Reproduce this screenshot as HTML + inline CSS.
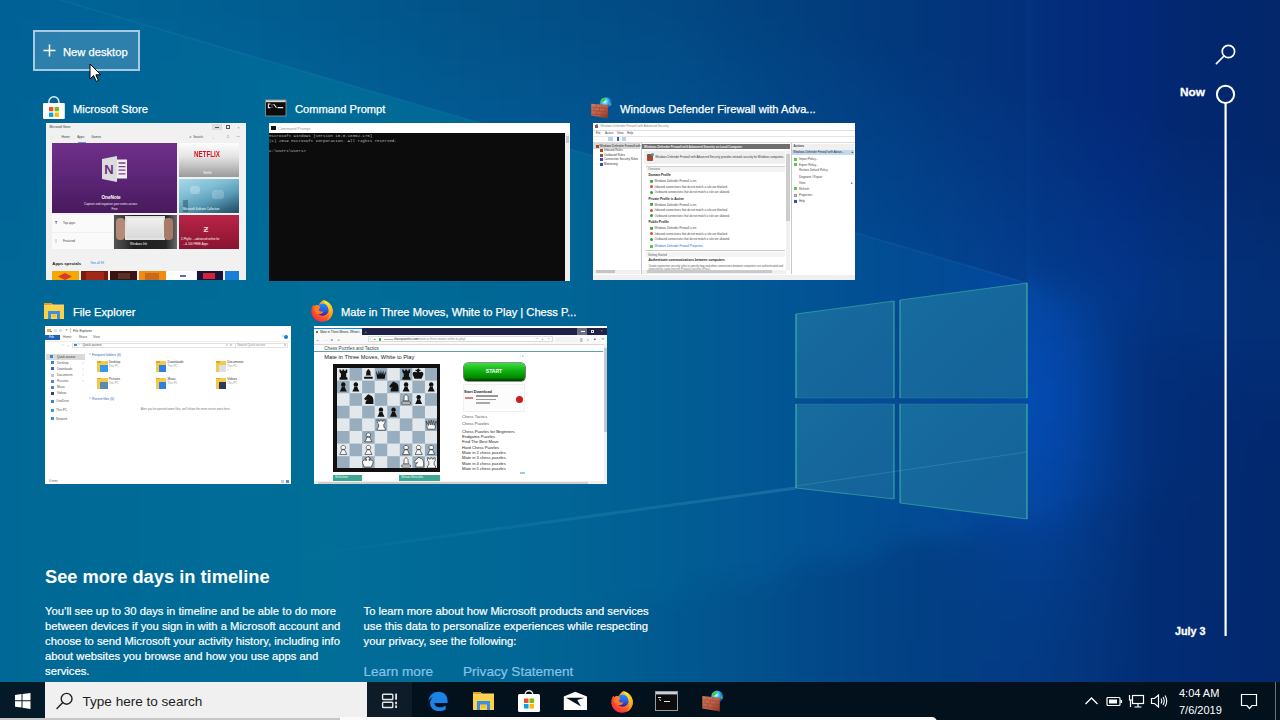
<!DOCTYPE html>
<html><head><meta charset="utf-8">
<style>
*{margin:0;padding:0;box-sizing:border-box}
html,body{width:1280px;height:720px;overflow:hidden}
body{position:relative;font-family:"Liberation Sans",sans-serif;background:#0a5a96;color:#fff}
.a{position:absolute}
.t{position:absolute;white-space:nowrap;color:#fff;font-size:11.15px;line-height:14px;-webkit-text-stroke:0.25px #fff}
.tx{-webkit-text-stroke:0.2px currentColor}
.th{position:absolute;overflow:hidden;background:#fff}
.th div,.th svg{position:absolute}
.g{background:#888}
i{display:block}
</style></head><body>

<!-- BACKGROUND -->
<div class="a" style="left:0;top:0;width:1280px;height:720px;overflow:hidden"><div style="position:absolute;left:-60px;top:-60px;width:1400px;height:840px;display:grid;grid-template-columns:repeat(70,20px);grid-auto-rows:20px;filter:blur(11px)">
<i style="background:#006096"></i><i style="background:#006096"></i><i style="background:#006096"></i><i style="background:#006096"></i><i style="background:#006196"></i><i style="background:#006296"></i><i style="background:#006296"></i><i style="background:#006397"></i><i style="background:#006397"></i><i style="background:#006497"></i><i style="background:#006597"></i><i style="background:#006597"></i><i style="background:#006697"></i><i style="background:#006797"></i><i style="background:#006797"></i><i style="background:#006898"></i><i style="background:#006998"></i><i style="background:#006998"></i><i style="background:#016a98"></i><i style="background:#016a98"></i><i style="background:#016a98"></i><i style="background:#016997"></i><i style="background:#016997"></i><i style="background:#016897"></i><i style="background:#016897"></i><i style="background:#016796"></i><i style="background:#016796"></i><i style="background:#016696"></i><i style="background:#016696"></i><i style="background:#016595"></i><i style="background:#016595"></i><i style="background:#016495"></i><i style="background:#016395"></i><i style="background:#016295"></i><i style="background:#016095"></i><i style="background:#015f94"></i><i style="background:#015e94"></i><i style="background:#015c94"></i><i style="background:#025b94"></i><i style="background:#025994"></i><i style="background:#025894"></i><i style="background:#025694"></i><i style="background:#025594"></i><i style="background:#025394"></i><i style="background:#025294"></i><i style="background:#025094"></i><i style="background:#024f94"></i><i style="background:#024d94"></i><i style="background:#024c93"></i><i style="background:#034b93"></i><i style="background:#034993"></i><i style="background:#034893"></i><i style="background:#034792"></i><i style="background:#034592"></i><i style="background:#032f7b"></i><i style="background:#032e7b"></i><i style="background:#032d7a"></i><i style="background:#032b7a"></i><i style="background:#032a7a"></i><i style="background:#03287a"></i><i style="background:#032875"></i><i style="background:#032871"></i><i style="background:#032870"></i><i style="background:#03276e"></i><i style="background:#03276d"></i><i style="background:#03276c"></i><i style="background:#03276a"></i><i style="background:#03266a"></i><i style="background:#03266a"></i><i style="background:#03266a"></i>
<i style="background:#006096"></i><i style="background:#006096"></i><i style="background:#006096"></i><i style="background:#006096"></i><i style="background:#006196"></i><i style="background:#006296"></i><i style="background:#006296"></i><i style="background:#006397"></i><i style="background:#006397"></i><i style="background:#006497"></i><i style="background:#006597"></i><i style="background:#006597"></i><i style="background:#006697"></i><i style="background:#006797"></i><i style="background:#006797"></i><i style="background:#006898"></i><i style="background:#006998"></i><i style="background:#006998"></i><i style="background:#016a98"></i><i style="background:#016a98"></i><i style="background:#016a98"></i><i style="background:#016997"></i><i style="background:#016997"></i><i style="background:#016897"></i><i style="background:#016897"></i><i style="background:#016796"></i><i style="background:#016796"></i><i style="background:#016696"></i><i style="background:#016696"></i><i style="background:#016595"></i><i style="background:#016595"></i><i style="background:#016495"></i><i style="background:#016395"></i><i style="background:#016295"></i><i style="background:#016095"></i><i style="background:#015f94"></i><i style="background:#015e94"></i><i style="background:#015c94"></i><i style="background:#025b94"></i><i style="background:#025994"></i><i style="background:#025894"></i><i style="background:#025694"></i><i style="background:#025594"></i><i style="background:#025394"></i><i style="background:#025294"></i><i style="background:#025094"></i><i style="background:#024f94"></i><i style="background:#024d94"></i><i style="background:#024c93"></i><i style="background:#034b93"></i><i style="background:#034993"></i><i style="background:#034893"></i><i style="background:#034792"></i><i style="background:#034592"></i><i style="background:#032f7b"></i><i style="background:#032e7b"></i><i style="background:#032d7a"></i><i style="background:#032b7a"></i><i style="background:#032a7a"></i><i style="background:#03287a"></i><i style="background:#032875"></i><i style="background:#032871"></i><i style="background:#032870"></i><i style="background:#03276e"></i><i style="background:#03276d"></i><i style="background:#03276c"></i><i style="background:#03276a"></i><i style="background:#03266a"></i><i style="background:#03266a"></i><i style="background:#03266a"></i>
<i style="background:#006096"></i><i style="background:#006096"></i><i style="background:#006096"></i><i style="background:#006096"></i><i style="background:#006196"></i><i style="background:#006296"></i><i style="background:#006296"></i><i style="background:#006397"></i><i style="background:#006397"></i><i style="background:#006497"></i><i style="background:#006597"></i><i style="background:#006597"></i><i style="background:#006697"></i><i style="background:#006797"></i><i style="background:#006797"></i><i style="background:#006898"></i><i style="background:#006998"></i><i style="background:#006998"></i><i style="background:#016a98"></i><i style="background:#016a98"></i><i style="background:#016a98"></i><i style="background:#016997"></i><i style="background:#016997"></i><i style="background:#016897"></i><i style="background:#016897"></i><i style="background:#016796"></i><i style="background:#016796"></i><i style="background:#016696"></i><i style="background:#016696"></i><i style="background:#016595"></i><i style="background:#016595"></i><i style="background:#016495"></i><i style="background:#016395"></i><i style="background:#016295"></i><i style="background:#016095"></i><i style="background:#015f94"></i><i style="background:#015e94"></i><i style="background:#015c94"></i><i style="background:#025b94"></i><i style="background:#025994"></i><i style="background:#025894"></i><i style="background:#025694"></i><i style="background:#025594"></i><i style="background:#025394"></i><i style="background:#025294"></i><i style="background:#025094"></i><i style="background:#024f94"></i><i style="background:#024d94"></i><i style="background:#024c93"></i><i style="background:#034b93"></i><i style="background:#034993"></i><i style="background:#034893"></i><i style="background:#034792"></i><i style="background:#034592"></i><i style="background:#032f7b"></i><i style="background:#032e7b"></i><i style="background:#032d7a"></i><i style="background:#032b7a"></i><i style="background:#032a7a"></i><i style="background:#03287a"></i><i style="background:#032875"></i><i style="background:#032871"></i><i style="background:#032870"></i><i style="background:#03276e"></i><i style="background:#03276d"></i><i style="background:#03276c"></i><i style="background:#03276a"></i><i style="background:#03266a"></i><i style="background:#03266a"></i><i style="background:#03266a"></i>
<i style="background:#006096"></i><i style="background:#006096"></i><i style="background:#006096"></i><i style="background:#006196"></i><i style="background:#006196"></i><i style="background:#006296"></i><i style="background:#006296"></i><i style="background:#006397"></i><i style="background:#006497"></i><i style="background:#006497"></i><i style="background:#006597"></i><i style="background:#006697"></i><i style="background:#006697"></i><i style="background:#006797"></i><i style="background:#006797"></i><i style="background:#006898"></i><i style="background:#006998"></i><i style="background:#006998"></i><i style="background:#016a98"></i><i style="background:#016b98"></i><i style="background:#016a98"></i><i style="background:#016997"></i><i style="background:#016997"></i><i style="background:#016897"></i><i style="background:#016897"></i><i style="background:#016796"></i><i style="background:#016796"></i><i style="background:#016696"></i><i style="background:#016696"></i><i style="background:#016595"></i><i style="background:#016595"></i><i style="background:#016495"></i><i style="background:#016395"></i><i style="background:#016295"></i><i style="background:#016095"></i><i style="background:#015f94"></i><i style="background:#015e94"></i><i style="background:#015c94"></i><i style="background:#025b94"></i><i style="background:#025994"></i><i style="background:#025894"></i><i style="background:#025694"></i><i style="background:#025594"></i><i style="background:#025394"></i><i style="background:#025294"></i><i style="background:#025094"></i><i style="background:#024f94"></i><i style="background:#024d94"></i><i style="background:#024c93"></i><i style="background:#034b93"></i><i style="background:#034993"></i><i style="background:#034893"></i><i style="background:#034792"></i><i style="background:#034592"></i><i style="background:#032f7b"></i><i style="background:#032e7b"></i><i style="background:#032d7a"></i><i style="background:#032b7a"></i><i style="background:#032a7a"></i><i style="background:#03287a"></i><i style="background:#032875"></i><i style="background:#032871"></i><i style="background:#032870"></i><i style="background:#03276e"></i><i style="background:#03276d"></i><i style="background:#03276c"></i><i style="background:#03276a"></i><i style="background:#03266a"></i><i style="background:#03266a"></i><i style="background:#03266a"></i>
<i style="background:#006196"></i><i style="background:#006196"></i><i style="background:#006196"></i><i style="background:#006196"></i><i style="background:#006296"></i><i style="background:#006296"></i><i style="background:#006396"></i><i style="background:#006397"></i><i style="background:#006497"></i><i style="background:#006597"></i><i style="background:#006597"></i><i style="background:#006697"></i><i style="background:#006797"></i><i style="background:#006797"></i><i style="background:#006897"></i><i style="background:#006898"></i><i style="background:#006998"></i><i style="background:#006a98"></i><i style="background:#016a98"></i><i style="background:#016b98"></i><i style="background:#016a98"></i><i style="background:#016a97"></i><i style="background:#016997"></i><i style="background:#016997"></i><i style="background:#016897"></i><i style="background:#016896"></i><i style="background:#016796"></i><i style="background:#016796"></i><i style="background:#016696"></i><i style="background:#016595"></i><i style="background:#016595"></i><i style="background:#016495"></i><i style="background:#016395"></i><i style="background:#016295"></i><i style="background:#016095"></i><i style="background:#015f94"></i><i style="background:#015e94"></i><i style="background:#015c94"></i><i style="background:#025b94"></i><i style="background:#025994"></i><i style="background:#025894"></i><i style="background:#025694"></i><i style="background:#025594"></i><i style="background:#025394"></i><i style="background:#025294"></i><i style="background:#025094"></i><i style="background:#024f94"></i><i style="background:#024d94"></i><i style="background:#024c93"></i><i style="background:#034b93"></i><i style="background:#034993"></i><i style="background:#034893"></i><i style="background:#034792"></i><i style="background:#034592"></i><i style="background:#032f7b"></i><i style="background:#032e7b"></i><i style="background:#032d7a"></i><i style="background:#032b7a"></i><i style="background:#032a7a"></i><i style="background:#03287a"></i><i style="background:#032875"></i><i style="background:#032871"></i><i style="background:#032870"></i><i style="background:#03276e"></i><i style="background:#03276d"></i><i style="background:#03276c"></i><i style="background:#03276a"></i><i style="background:#03266a"></i><i style="background:#03266a"></i><i style="background:#03266a"></i>
<i style="background:#006196"></i><i style="background:#006196"></i><i style="background:#006196"></i><i style="background:#006296"></i><i style="background:#006296"></i><i style="background:#006396"></i><i style="background:#006396"></i><i style="background:#006497"></i><i style="background:#006497"></i><i style="background:#006597"></i><i style="background:#006697"></i><i style="background:#006697"></i><i style="background:#006797"></i><i style="background:#006797"></i><i style="background:#006897"></i><i style="background:#006998"></i><i style="background:#006998"></i><i style="background:#006a98"></i><i style="background:#016a98"></i><i style="background:#016b98"></i><i style="background:#016a98"></i><i style="background:#016a97"></i><i style="background:#016997"></i><i style="background:#016997"></i><i style="background:#016897"></i><i style="background:#016896"></i><i style="background:#016796"></i><i style="background:#016796"></i><i style="background:#016696"></i><i style="background:#016695"></i><i style="background:#016595"></i><i style="background:#016495"></i><i style="background:#016395"></i><i style="background:#016295"></i><i style="background:#016095"></i><i style="background:#015f94"></i><i style="background:#015e94"></i><i style="background:#015c94"></i><i style="background:#025b94"></i><i style="background:#025994"></i><i style="background:#025894"></i><i style="background:#025694"></i><i style="background:#025594"></i><i style="background:#025394"></i><i style="background:#025294"></i><i style="background:#025094"></i><i style="background:#024f94"></i><i style="background:#024d94"></i><i style="background:#024c93"></i><i style="background:#034b93"></i><i style="background:#034993"></i><i style="background:#034893"></i><i style="background:#034793"></i><i style="background:#034592"></i><i style="background:#032f7b"></i><i style="background:#032e7b"></i><i style="background:#032d7a"></i><i style="background:#032b7a"></i><i style="background:#032a7a"></i><i style="background:#03287a"></i><i style="background:#032875"></i><i style="background:#032871"></i><i style="background:#032870"></i><i style="background:#03276e"></i><i style="background:#03276d"></i><i style="background:#03276c"></i><i style="background:#03276a"></i><i style="background:#03266a"></i><i style="background:#03266a"></i><i style="background:#03266a"></i>
<i style="background:#006296"></i><i style="background:#006296"></i><i style="background:#006296"></i><i style="background:#006296"></i><i style="background:#006396"></i><i style="background:#006396"></i><i style="background:#006496"></i><i style="background:#006497"></i><i style="background:#006597"></i><i style="background:#006597"></i><i style="background:#006697"></i><i style="background:#006797"></i><i style="background:#006797"></i><i style="background:#006897"></i><i style="background:#006897"></i><i style="background:#006998"></i><i style="background:#006998"></i><i style="background:#006a98"></i><i style="background:#016b98"></i><i style="background:#016b98"></i><i style="background:#016b98"></i><i style="background:#016a97"></i><i style="background:#016a97"></i><i style="background:#016997"></i><i style="background:#016897"></i><i style="background:#016896"></i><i style="background:#016796"></i><i style="background:#016796"></i><i style="background:#016696"></i><i style="background:#016695"></i><i style="background:#016595"></i><i style="background:#016495"></i><i style="background:#016395"></i><i style="background:#016295"></i><i style="background:#016095"></i><i style="background:#015f94"></i><i style="background:#015e94"></i><i style="background:#015c94"></i><i style="background:#025b94"></i><i style="background:#025994"></i><i style="background:#025894"></i><i style="background:#025694"></i><i style="background:#025594"></i><i style="background:#025394"></i><i style="background:#025294"></i><i style="background:#025094"></i><i style="background:#024f94"></i><i style="background:#024d94"></i><i style="background:#024c93"></i><i style="background:#034b93"></i><i style="background:#034993"></i><i style="background:#034893"></i><i style="background:#034793"></i><i style="background:#034592"></i><i style="background:#032f7b"></i><i style="background:#032e7b"></i><i style="background:#032d7a"></i><i style="background:#032b7a"></i><i style="background:#032a7a"></i><i style="background:#03287a"></i><i style="background:#032875"></i><i style="background:#032871"></i><i style="background:#032870"></i><i style="background:#03276e"></i><i style="background:#03276d"></i><i style="background:#03276c"></i><i style="background:#03276a"></i><i style="background:#03266a"></i><i style="background:#03266a"></i><i style="background:#03266a"></i>
<i style="background:#006296"></i><i style="background:#006296"></i><i style="background:#006296"></i><i style="background:#006396"></i><i style="background:#006396"></i><i style="background:#006496"></i><i style="background:#006496"></i><i style="background:#006597"></i><i style="background:#006597"></i><i style="background:#006697"></i><i style="background:#006697"></i><i style="background:#006797"></i><i style="background:#006897"></i><i style="background:#006897"></i><i style="background:#006997"></i><i style="background:#006998"></i><i style="background:#006a98"></i><i style="background:#006a98"></i><i style="background:#016b98"></i><i style="background:#016b98"></i><i style="background:#016b98"></i><i style="background:#016a97"></i><i style="background:#016a97"></i><i style="background:#016997"></i><i style="background:#016997"></i><i style="background:#016896"></i><i style="background:#016796"></i><i style="background:#016796"></i><i style="background:#016696"></i><i style="background:#016695"></i><i style="background:#016595"></i><i style="background:#016495"></i><i style="background:#016395"></i><i style="background:#016295"></i><i style="background:#016095"></i><i style="background:#015f94"></i><i style="background:#015e94"></i><i style="background:#015c94"></i><i style="background:#025b94"></i><i style="background:#025994"></i><i style="background:#025894"></i><i style="background:#025694"></i><i style="background:#025594"></i><i style="background:#025394"></i><i style="background:#025294"></i><i style="background:#025094"></i><i style="background:#024f94"></i><i style="background:#024d94"></i><i style="background:#024c93"></i><i style="background:#034b93"></i><i style="background:#034993"></i><i style="background:#034893"></i><i style="background:#034793"></i><i style="background:#034593"></i><i style="background:#03307b"></i><i style="background:#032e7b"></i><i style="background:#032d7a"></i><i style="background:#032b7a"></i><i style="background:#032a7a"></i><i style="background:#03287a"></i><i style="background:#032875"></i><i style="background:#032871"></i><i style="background:#032870"></i><i style="background:#03276e"></i><i style="background:#03276d"></i><i style="background:#03276c"></i><i style="background:#03276a"></i><i style="background:#03266a"></i><i style="background:#03266a"></i><i style="background:#03266a"></i>
<i style="background:#006396"></i><i style="background:#006396"></i><i style="background:#006396"></i><i style="background:#006396"></i><i style="background:#006496"></i><i style="background:#006496"></i><i style="background:#006596"></i><i style="background:#006597"></i><i style="background:#006697"></i><i style="background:#006697"></i><i style="background:#006797"></i><i style="background:#006797"></i><i style="background:#006897"></i><i style="background:#006897"></i><i style="background:#006997"></i><i style="background:#006998"></i><i style="background:#006a98"></i><i style="background:#006b98"></i><i style="background:#016b98"></i><i style="background:#016c98"></i><i style="background:#016b98"></i><i style="background:#016a97"></i><i style="background:#016a97"></i><i style="background:#016997"></i><i style="background:#016997"></i><i style="background:#016896"></i><i style="background:#016896"></i><i style="background:#016796"></i><i style="background:#016696"></i><i style="background:#016695"></i><i style="background:#016595"></i><i style="background:#016495"></i><i style="background:#016395"></i><i style="background:#016295"></i><i style="background:#016095"></i><i style="background:#015f94"></i><i style="background:#015e94"></i><i style="background:#015c94"></i><i style="background:#025b94"></i><i style="background:#025994"></i><i style="background:#025894"></i><i style="background:#025694"></i><i style="background:#025594"></i><i style="background:#025394"></i><i style="background:#025294"></i><i style="background:#025094"></i><i style="background:#024f94"></i><i style="background:#024d94"></i><i style="background:#024c93"></i><i style="background:#034b93"></i><i style="background:#034993"></i><i style="background:#034893"></i><i style="background:#034793"></i><i style="background:#034593"></i><i style="background:#03317d"></i><i style="background:#032f7c"></i><i style="background:#032e7c"></i><i style="background:#032c7b"></i><i style="background:#032a7a"></i><i style="background:#03287a"></i><i style="background:#032875"></i><i style="background:#032871"></i><i style="background:#032870"></i><i style="background:#03276e"></i><i style="background:#03276d"></i><i style="background:#03276c"></i><i style="background:#03276a"></i><i style="background:#03266a"></i><i style="background:#03266a"></i><i style="background:#03266a"></i>
<i style="background:#006396"></i><i style="background:#006396"></i><i style="background:#006396"></i><i style="background:#006496"></i><i style="background:#006496"></i><i style="background:#006596"></i><i style="background:#006596"></i><i style="background:#006697"></i><i style="background:#006697"></i><i style="background:#006797"></i><i style="background:#006797"></i><i style="background:#006897"></i><i style="background:#006897"></i><i style="background:#006997"></i><i style="background:#006997"></i><i style="background:#006a98"></i><i style="background:#006a98"></i><i style="background:#006b98"></i><i style="background:#016b98"></i><i style="background:#016c98"></i><i style="background:#016b98"></i><i style="background:#016b97"></i><i style="background:#016a97"></i><i style="background:#016997"></i><i style="background:#016997"></i><i style="background:#016896"></i><i style="background:#016896"></i><i style="background:#016796"></i><i style="background:#016696"></i><i style="background:#016695"></i><i style="background:#016595"></i><i style="background:#016495"></i><i style="background:#016395"></i><i style="background:#016295"></i><i style="background:#016095"></i><i style="background:#015f94"></i><i style="background:#015e94"></i><i style="background:#015c94"></i><i style="background:#025b94"></i><i style="background:#025994"></i><i style="background:#025894"></i><i style="background:#025694"></i><i style="background:#025594"></i><i style="background:#025394"></i><i style="background:#025294"></i><i style="background:#025094"></i><i style="background:#024f94"></i><i style="background:#024d94"></i><i style="background:#024c93"></i><i style="background:#034b93"></i><i style="background:#034993"></i><i style="background:#034893"></i><i style="background:#034793"></i><i style="background:#034593"></i><i style="background:#03337f"></i><i style="background:#03317e"></i><i style="background:#032f7d"></i><i style="background:#032d7d"></i><i style="background:#032b7c"></i><i style="background:#032a7b"></i><i style="background:#032976"></i><i style="background:#032872"></i><i style="background:#032870"></i><i style="background:#03276e"></i><i style="background:#03276d"></i><i style="background:#03276c"></i><i style="background:#03276a"></i><i style="background:#03266a"></i><i style="background:#03266a"></i><i style="background:#03266a"></i>
<i style="background:#006496"></i><i style="background:#006496"></i><i style="background:#006496"></i><i style="background:#006496"></i><i style="background:#006596"></i><i style="background:#006596"></i><i style="background:#006696"></i><i style="background:#006697"></i><i style="background:#006797"></i><i style="background:#006797"></i><i style="background:#006897"></i><i style="background:#006897"></i><i style="background:#006997"></i><i style="background:#006997"></i><i style="background:#006a97"></i><i style="background:#006a98"></i><i style="background:#006b98"></i><i style="background:#006b98"></i><i style="background:#016c98"></i><i style="background:#016c98"></i><i style="background:#016b98"></i><i style="background:#016b97"></i><i style="background:#016a97"></i><i style="background:#016a97"></i><i style="background:#016997"></i><i style="background:#016896"></i><i style="background:#016896"></i><i style="background:#016796"></i><i style="background:#016696"></i><i style="background:#016695"></i><i style="background:#016595"></i><i style="background:#016495"></i><i style="background:#016395"></i><i style="background:#016295"></i><i style="background:#016095"></i><i style="background:#015f94"></i><i style="background:#015e94"></i><i style="background:#015c94"></i><i style="background:#025b94"></i><i style="background:#025994"></i><i style="background:#025894"></i><i style="background:#025694"></i><i style="background:#025594"></i><i style="background:#025394"></i><i style="background:#025294"></i><i style="background:#025094"></i><i style="background:#024f94"></i><i style="background:#024d94"></i><i style="background:#024c93"></i><i style="background:#034b93"></i><i style="background:#034993"></i><i style="background:#034893"></i><i style="background:#034794"></i><i style="background:#034594"></i><i style="background:#033481"></i><i style="background:#033280"></i><i style="background:#03307f"></i><i style="background:#032e7f"></i><i style="background:#032d7e"></i><i style="background:#032b7d"></i><i style="background:#032a78"></i><i style="background:#032a74"></i><i style="background:#032972"></i><i style="background:#032870"></i><i style="background:#03286e"></i><i style="background:#03276c"></i><i style="background:#03276a"></i><i style="background:#03266a"></i><i style="background:#03266a"></i><i style="background:#03266a"></i>
<i style="background:#006496"></i><i style="background:#006496"></i><i style="background:#006496"></i><i style="background:#006496"></i><i style="background:#006596"></i><i style="background:#006596"></i><i style="background:#006696"></i><i style="background:#006697"></i><i style="background:#006797"></i><i style="background:#006797"></i><i style="background:#006897"></i><i style="background:#006897"></i><i style="background:#006997"></i><i style="background:#006997"></i><i style="background:#006a97"></i><i style="background:#006a98"></i><i style="background:#006b98"></i><i style="background:#006b98"></i><i style="background:#016c98"></i><i style="background:#016c98"></i><i style="background:#016c98"></i><i style="background:#016b97"></i><i style="background:#016a97"></i><i style="background:#016a97"></i><i style="background:#016997"></i><i style="background:#016896"></i><i style="background:#016896"></i><i style="background:#016796"></i><i style="background:#016796"></i><i style="background:#016695"></i><i style="background:#016595"></i><i style="background:#016495"></i><i style="background:#016395"></i><i style="background:#016295"></i><i style="background:#016095"></i><i style="background:#015f94"></i><i style="background:#015e94"></i><i style="background:#015c94"></i><i style="background:#025b94"></i><i style="background:#025994"></i><i style="background:#025894"></i><i style="background:#025694"></i><i style="background:#025594"></i><i style="background:#025394"></i><i style="background:#025294"></i><i style="background:#025094"></i><i style="background:#024f94"></i><i style="background:#024d94"></i><i style="background:#024c93"></i><i style="background:#034b93"></i><i style="background:#034994"></i><i style="background:#034894"></i><i style="background:#034794"></i><i style="background:#034695"></i><i style="background:#033583"></i><i style="background:#033382"></i><i style="background:#033281"></i><i style="background:#033080"></i><i style="background:#032e80"></i><i style="background:#032c7f"></i><i style="background:#032c7a"></i><i style="background:#032b75"></i><i style="background:#032a73"></i><i style="background:#032a72"></i><i style="background:#032970"></i><i style="background:#03286e"></i><i style="background:#03286c"></i><i style="background:#03276b"></i><i style="background:#03276b"></i><i style="background:#03276b"></i>
<i style="background:#006596"></i><i style="background:#006596"></i><i style="background:#006596"></i><i style="background:#006596"></i><i style="background:#006596"></i><i style="background:#006696"></i><i style="background:#006696"></i><i style="background:#006797"></i><i style="background:#006797"></i><i style="background:#006897"></i><i style="background:#006897"></i><i style="background:#006997"></i><i style="background:#006997"></i><i style="background:#006a97"></i><i style="background:#006a97"></i><i style="background:#006b98"></i><i style="background:#006b98"></i><i style="background:#006c98"></i><i style="background:#016c98"></i><i style="background:#016d98"></i><i style="background:#016c98"></i><i style="background:#016b97"></i><i style="background:#016b97"></i><i style="background:#016a97"></i><i style="background:#016997"></i><i style="background:#016996"></i><i style="background:#016896"></i><i style="background:#016796"></i><i style="background:#016796"></i><i style="background:#016695"></i><i style="background:#016595"></i><i style="background:#016495"></i><i style="background:#016395"></i><i style="background:#016295"></i><i style="background:#016095"></i><i style="background:#015f94"></i><i style="background:#015e94"></i><i style="background:#015c94"></i><i style="background:#025b94"></i><i style="background:#025994"></i><i style="background:#025894"></i><i style="background:#025694"></i><i style="background:#025594"></i><i style="background:#025394"></i><i style="background:#025294"></i><i style="background:#025094"></i><i style="background:#024f94"></i><i style="background:#024d94"></i><i style="background:#024c93"></i><i style="background:#034b94"></i><i style="background:#034994"></i><i style="background:#034894"></i><i style="background:#034795"></i><i style="background:#034696"></i><i style="background:#033785"></i><i style="background:#033584"></i><i style="background:#033383"></i><i style="background:#033182"></i><i style="background:#032f81"></i><i style="background:#032e81"></i><i style="background:#032d7c"></i><i style="background:#032c77"></i><i style="background:#032c75"></i><i style="background:#032b73"></i><i style="background:#032a71"></i><i style="background:#032a6f"></i><i style="background:#03296e"></i><i style="background:#03296d"></i><i style="background:#03296d"></i><i style="background:#03296d"></i>
<i style="background:#006596"></i><i style="background:#006596"></i><i style="background:#006596"></i><i style="background:#006596"></i><i style="background:#006696"></i><i style="background:#006696"></i><i style="background:#006796"></i><i style="background:#006797"></i><i style="background:#006897"></i><i style="background:#006897"></i><i style="background:#006997"></i><i style="background:#006997"></i><i style="background:#006a97"></i><i style="background:#006a97"></i><i style="background:#006a97"></i><i style="background:#006b98"></i><i style="background:#006b98"></i><i style="background:#006c98"></i><i style="background:#016c98"></i><i style="background:#016d98"></i><i style="background:#016c98"></i><i style="background:#016b97"></i><i style="background:#016b97"></i><i style="background:#016a97"></i><i style="background:#016997"></i><i style="background:#016996"></i><i style="background:#016896"></i><i style="background:#016796"></i><i style="background:#016796"></i><i style="background:#016695"></i><i style="background:#016595"></i><i style="background:#016595"></i><i style="background:#016395"></i><i style="background:#016295"></i><i style="background:#016095"></i><i style="background:#015f94"></i><i style="background:#015e94"></i><i style="background:#015c94"></i><i style="background:#025b94"></i><i style="background:#025994"></i><i style="background:#025894"></i><i style="background:#025694"></i><i style="background:#025594"></i><i style="background:#025394"></i><i style="background:#025294"></i><i style="background:#025094"></i><i style="background:#024f94"></i><i style="background:#024d94"></i><i style="background:#024c94"></i><i style="background:#034b94"></i><i style="background:#034994"></i><i style="background:#034895"></i><i style="background:#034796"></i><i style="background:#034698"></i><i style="background:#033886"></i><i style="background:#033686"></i><i style="background:#033485"></i><i style="background:#033384"></i><i style="background:#033183"></i><i style="background:#032f82"></i><i style="background:#032e7d"></i><i style="background:#032e79"></i><i style="background:#032d77"></i><i style="background:#032c75"></i><i style="background:#032c73"></i><i style="background:#032b71"></i><i style="background:#032a6f"></i><i style="background:#032a6e"></i><i style="background:#032a6e"></i><i style="background:#032a6e"></i>
<i style="background:#006696"></i><i style="background:#006696"></i><i style="background:#006696"></i><i style="background:#006696"></i><i style="background:#006696"></i><i style="background:#006796"></i><i style="background:#006796"></i><i style="background:#006897"></i><i style="background:#006897"></i><i style="background:#006997"></i><i style="background:#006997"></i><i style="background:#006997"></i><i style="background:#006a97"></i><i style="background:#006a97"></i><i style="background:#006b97"></i><i style="background:#006b98"></i><i style="background:#006c98"></i><i style="background:#006c98"></i><i style="background:#016d98"></i><i style="background:#016d98"></i><i style="background:#016c98"></i><i style="background:#016c97"></i><i style="background:#016b97"></i><i style="background:#016a97"></i><i style="background:#016a97"></i><i style="background:#016996"></i><i style="background:#016896"></i><i style="background:#016796"></i><i style="background:#016796"></i><i style="background:#016695"></i><i style="background:#016595"></i><i style="background:#016595"></i><i style="background:#016395"></i><i style="background:#016295"></i><i style="background:#016095"></i><i style="background:#015f94"></i><i style="background:#015e94"></i><i style="background:#015c94"></i><i style="background:#025b94"></i><i style="background:#025994"></i><i style="background:#025894"></i><i style="background:#025694"></i><i style="background:#025594"></i><i style="background:#025394"></i><i style="background:#025294"></i><i style="background:#025094"></i><i style="background:#024f94"></i><i style="background:#024d94"></i><i style="background:#024c94"></i><i style="background:#034b94"></i><i style="background:#034995"></i><i style="background:#034896"></i><i style="background:#034798"></i><i style="background:#03479a"></i><i style="background:#033988"></i><i style="background:#033887"></i><i style="background:#033687"></i><i style="background:#033486"></i><i style="background:#033285"></i><i style="background:#033084"></i><i style="background:#03307f"></i><i style="background:#032f7b"></i><i style="background:#032e79"></i><i style="background:#032e77"></i><i style="background:#032d75"></i><i style="background:#032c73"></i><i style="background:#032c71"></i><i style="background:#032b70"></i><i style="background:#032b70"></i><i style="background:#032b70"></i>
<i style="background:#006696"></i><i style="background:#006696"></i><i style="background:#006696"></i><i style="background:#006696"></i><i style="background:#006796"></i><i style="background:#006796"></i><i style="background:#006896"></i><i style="background:#006897"></i><i style="background:#006997"></i><i style="background:#006997"></i><i style="background:#006997"></i><i style="background:#006a97"></i><i style="background:#006a97"></i><i style="background:#006b97"></i><i style="background:#006b97"></i><i style="background:#006c98"></i><i style="background:#006c98"></i><i style="background:#006c98"></i><i style="background:#016d98"></i><i style="background:#016d98"></i><i style="background:#016d98"></i><i style="background:#016c97"></i><i style="background:#016b97"></i><i style="background:#016a97"></i><i style="background:#016a97"></i><i style="background:#016996"></i><i style="background:#016896"></i><i style="background:#016896"></i><i style="background:#016796"></i><i style="background:#016695"></i><i style="background:#016595"></i><i style="background:#016595"></i><i style="background:#016395"></i><i style="background:#016295"></i><i style="background:#016095"></i><i style="background:#015f94"></i><i style="background:#015e94"></i><i style="background:#015c94"></i><i style="background:#025b94"></i><i style="background:#025994"></i><i style="background:#025894"></i><i style="background:#025694"></i><i style="background:#025594"></i><i style="background:#025394"></i><i style="background:#025294"></i><i style="background:#025094"></i><i style="background:#024f94"></i><i style="background:#024d94"></i><i style="background:#024c94"></i><i style="background:#034b94"></i><i style="background:#034a95"></i><i style="background:#034997"></i><i style="background:#03489a"></i><i style="background:#03479c"></i><i style="background:#033b8a"></i><i style="background:#033989"></i><i style="background:#033788"></i><i style="background:#033588"></i><i style="background:#033387"></i><i style="background:#033286"></i><i style="background:#033181"></i><i style="background:#03307d"></i><i style="background:#03307b"></i><i style="background:#032f79"></i><i style="background:#032e77"></i><i style="background:#032e75"></i><i style="background:#032d73"></i><i style="background:#032d72"></i><i style="background:#032d72"></i><i style="background:#032d72"></i>
<i style="background:#006796"></i><i style="background:#006796"></i><i style="background:#006796"></i><i style="background:#006796"></i><i style="background:#006796"></i><i style="background:#006896"></i><i style="background:#006896"></i><i style="background:#006997"></i><i style="background:#006997"></i><i style="background:#006997"></i><i style="background:#006a97"></i><i style="background:#006a97"></i><i style="background:#006b97"></i><i style="background:#006b97"></i><i style="background:#006b97"></i><i style="background:#006c98"></i><i style="background:#006c98"></i><i style="background:#006d98"></i><i style="background:#016d98"></i><i style="background:#016d98"></i><i style="background:#016d98"></i><i style="background:#016c97"></i><i style="background:#016b97"></i><i style="background:#016b97"></i><i style="background:#016a97"></i><i style="background:#016996"></i><i style="background:#016896"></i><i style="background:#016896"></i><i style="background:#016796"></i><i style="background:#016695"></i><i style="background:#016595"></i><i style="background:#016595"></i><i style="background:#016395"></i><i style="background:#016295"></i><i style="background:#016095"></i><i style="background:#015f94"></i><i style="background:#015e94"></i><i style="background:#015c94"></i><i style="background:#025b94"></i><i style="background:#025994"></i><i style="background:#025894"></i><i style="background:#025694"></i><i style="background:#025594"></i><i style="background:#025394"></i><i style="background:#025294"></i><i style="background:#025094"></i><i style="background:#024f94"></i><i style="background:#024d94"></i><i style="background:#024c94"></i><i style="background:#034b95"></i><i style="background:#034a96"></i><i style="background:#034999"></i><i style="background:#03489c"></i><i style="background:#03489f"></i><i style="background:#033c8c"></i><i style="background:#033a8b"></i><i style="background:#03388a"></i><i style="background:#03378a"></i><i style="background:#033589"></i><i style="background:#033388"></i><i style="background:#033283"></i><i style="background:#03327e"></i><i style="background:#03317c"></i><i style="background:#03307a"></i><i style="background:#032f78"></i><i style="background:#032f76"></i><i style="background:#032e75"></i><i style="background:#032e74"></i><i style="background:#032e74"></i><i style="background:#032e74"></i>
<i style="background:#006796"></i><i style="background:#006796"></i><i style="background:#006796"></i><i style="background:#006796"></i><i style="background:#006896"></i><i style="background:#006896"></i><i style="background:#006996"></i><i style="background:#006997"></i><i style="background:#006997"></i><i style="background:#006a97"></i><i style="background:#006a97"></i><i style="background:#006b97"></i><i style="background:#006b97"></i><i style="background:#006b97"></i><i style="background:#006c97"></i><i style="background:#006c98"></i><i style="background:#006c98"></i><i style="background:#006d98"></i><i style="background:#016d98"></i><i style="background:#016e98"></i><i style="background:#016d98"></i><i style="background:#016c97"></i><i style="background:#016b97"></i><i style="background:#016b97"></i><i style="background:#016a97"></i><i style="background:#016996"></i><i style="background:#016896"></i><i style="background:#016896"></i><i style="background:#016796"></i><i style="background:#016695"></i><i style="background:#016695"></i><i style="background:#016595"></i><i style="background:#016395"></i><i style="background:#016295"></i><i style="background:#016095"></i><i style="background:#015f94"></i><i style="background:#015e94"></i><i style="background:#015c94"></i><i style="background:#025b94"></i><i style="background:#025994"></i><i style="background:#025894"></i><i style="background:#025694"></i><i style="background:#025594"></i><i style="background:#025394"></i><i style="background:#025294"></i><i style="background:#025094"></i><i style="background:#024f94"></i><i style="background:#024d94"></i><i style="background:#024c94"></i><i style="background:#034b95"></i><i style="background:#034a97"></i><i style="background:#03499a"></i><i style="background:#03499e"></i><i style="background:#0448a2"></i><i style="background:#0448a3"></i><i style="background:#034096"></i><i style="background:#033c90"></i><i style="background:#03398d"></i><i style="background:#03378a"></i><i style="background:#033488"></i><i style="background:#033383"></i><i style="background:#03327f"></i><i style="background:#03317d"></i><i style="background:#03317b"></i><i style="background:#033079"></i><i style="background:#032f77"></i><i style="background:#032f76"></i><i style="background:#032e75"></i><i style="background:#032e75"></i><i style="background:#032e75"></i>
<i style="background:#006896"></i><i style="background:#006896"></i><i style="background:#006896"></i><i style="background:#006896"></i><i style="background:#006896"></i><i style="background:#006996"></i><i style="background:#006996"></i><i style="background:#006997"></i><i style="background:#006a97"></i><i style="background:#006a97"></i><i style="background:#006b97"></i><i style="background:#006b97"></i><i style="background:#006b97"></i><i style="background:#006c97"></i><i style="background:#006c97"></i><i style="background:#006c98"></i><i style="background:#006d98"></i><i style="background:#006d98"></i><i style="background:#016e98"></i><i style="background:#016e98"></i><i style="background:#016d98"></i><i style="background:#016c97"></i><i style="background:#016c97"></i><i style="background:#016b97"></i><i style="background:#016a97"></i><i style="background:#016996"></i><i style="background:#016996"></i><i style="background:#016896"></i><i style="background:#016796"></i><i style="background:#016695"></i><i style="background:#016695"></i><i style="background:#016595"></i><i style="background:#016395"></i><i style="background:#016295"></i><i style="background:#016095"></i><i style="background:#015f94"></i><i style="background:#015e94"></i><i style="background:#015c94"></i><i style="background:#025b94"></i><i style="background:#025994"></i><i style="background:#025894"></i><i style="background:#025694"></i><i style="background:#025594"></i><i style="background:#025394"></i><i style="background:#025294"></i><i style="background:#025094"></i><i style="background:#024f94"></i><i style="background:#024d94"></i><i style="background:#024c94"></i><i style="background:#034b95"></i><i style="background:#034a98"></i><i style="background:#03499c"></i><i style="background:#0349a1"></i><i style="background:#0449a5"></i><i style="background:#0448a7"></i><i style="background:#0446a3"></i><i style="background:#03429b"></i><i style="background:#033c91"></i><i style="background:#03388b"></i><i style="background:#033587"></i><i style="background:#033382"></i><i style="background:#03327e"></i><i style="background:#03317d"></i><i style="background:#03317b"></i><i style="background:#03307a"></i><i style="background:#032f78"></i><i style="background:#032f76"></i><i style="background:#032e75"></i><i style="background:#032e75"></i><i style="background:#032e75"></i>
<i style="background:#006896"></i><i style="background:#006896"></i><i style="background:#006896"></i><i style="background:#006896"></i><i style="background:#006996"></i><i style="background:#006996"></i><i style="background:#006996"></i><i style="background:#006a97"></i><i style="background:#006a97"></i><i style="background:#006a97"></i><i style="background:#006b97"></i><i style="background:#006b97"></i><i style="background:#006b97"></i><i style="background:#006c97"></i><i style="background:#006c97"></i><i style="background:#006d98"></i><i style="background:#006d98"></i><i style="background:#006d98"></i><i style="background:#016e98"></i><i style="background:#016e98"></i><i style="background:#016d98"></i><i style="background:#016c97"></i><i style="background:#016c97"></i><i style="background:#016b97"></i><i style="background:#016a97"></i><i style="background:#016996"></i><i style="background:#016996"></i><i style="background:#016896"></i><i style="background:#016796"></i><i style="background:#016695"></i><i style="background:#016695"></i><i style="background:#016595"></i><i style="background:#016395"></i><i style="background:#016295"></i><i style="background:#016095"></i><i style="background:#015f94"></i><i style="background:#015e94"></i><i style="background:#015c94"></i><i style="background:#025b94"></i><i style="background:#025994"></i><i style="background:#025894"></i><i style="background:#025694"></i><i style="background:#025594"></i><i style="background:#025394"></i><i style="background:#025294"></i><i style="background:#025094"></i><i style="background:#024f94"></i><i style="background:#024d94"></i><i style="background:#034c94"></i><i style="background:#034b96"></i><i style="background:#034a98"></i><i style="background:#03499d"></i><i style="background:#0349a3"></i><i style="background:#044aa8"></i><i style="background:#0449aa"></i><i style="background:#0447a7"></i><i style="background:#04439f"></i><i style="background:#033e95"></i><i style="background:#03398b"></i><i style="background:#033485"></i><i style="background:#03327f"></i><i style="background:#03317d"></i><i style="background:#03317c"></i><i style="background:#03307b"></i><i style="background:#033079"></i><i style="background:#032f78"></i><i style="background:#032f76"></i><i style="background:#032e76"></i><i style="background:#032e76"></i><i style="background:#032e76"></i>
<i style="background:#006896"></i><i style="background:#006896"></i><i style="background:#006896"></i><i style="background:#006896"></i><i style="background:#006996"></i><i style="background:#006996"></i><i style="background:#006996"></i><i style="background:#006a97"></i><i style="background:#006a97"></i><i style="background:#006a97"></i><i style="background:#006b97"></i><i style="background:#006b97"></i><i style="background:#006b97"></i><i style="background:#006c97"></i><i style="background:#006c97"></i><i style="background:#006d98"></i><i style="background:#006d98"></i><i style="background:#006d98"></i><i style="background:#016e98"></i><i style="background:#016e98"></i><i style="background:#016d98"></i><i style="background:#016c97"></i><i style="background:#016c97"></i><i style="background:#016b97"></i><i style="background:#016a97"></i><i style="background:#016996"></i><i style="background:#016996"></i><i style="background:#016896"></i><i style="background:#016796"></i><i style="background:#016695"></i><i style="background:#016695"></i><i style="background:#016595"></i><i style="background:#016395"></i><i style="background:#016295"></i><i style="background:#016095"></i><i style="background:#015f94"></i><i style="background:#015e94"></i><i style="background:#015c94"></i><i style="background:#025b94"></i><i style="background:#025994"></i><i style="background:#025894"></i><i style="background:#025694"></i><i style="background:#025594"></i><i style="background:#025394"></i><i style="background:#025294"></i><i style="background:#025094"></i><i style="background:#024f94"></i><i style="background:#024d94"></i><i style="background:#034c94"></i><i style="background:#034b96"></i><i style="background:#034a99"></i><i style="background:#034a9e"></i><i style="background:#044aa4"></i><i style="background:#044aaa"></i><i style="background:#044aad"></i><i style="background:#0448aa"></i><i style="background:#0444a2"></i><i style="background:#033f97"></i><i style="background:#03398c"></i><i style="background:#033483"></i><i style="background:#03307d"></i><i style="background:#032f7b"></i><i style="background:#032f7a"></i><i style="background:#032f79"></i><i style="background:#032f78"></i><i style="background:#032e77"></i><i style="background:#032e76"></i><i style="background:#032e75"></i><i style="background:#032e75"></i><i style="background:#032e75"></i>
<i style="background:#006896"></i><i style="background:#006896"></i><i style="background:#006896"></i><i style="background:#006896"></i><i style="background:#006996"></i><i style="background:#006996"></i><i style="background:#006996"></i><i style="background:#006a97"></i><i style="background:#006a97"></i><i style="background:#006a97"></i><i style="background:#006b97"></i><i style="background:#006b97"></i><i style="background:#006b97"></i><i style="background:#006c97"></i><i style="background:#006c97"></i><i style="background:#006d98"></i><i style="background:#006d98"></i><i style="background:#006d98"></i><i style="background:#016e98"></i><i style="background:#016e98"></i><i style="background:#016d98"></i><i style="background:#016c97"></i><i style="background:#016c97"></i><i style="background:#016b97"></i><i style="background:#016a97"></i><i style="background:#016996"></i><i style="background:#016996"></i><i style="background:#016896"></i><i style="background:#016796"></i><i style="background:#016695"></i><i style="background:#016695"></i><i style="background:#016595"></i><i style="background:#016395"></i><i style="background:#016295"></i><i style="background:#016095"></i><i style="background:#015f94"></i><i style="background:#015e94"></i><i style="background:#015c94"></i><i style="background:#025b94"></i><i style="background:#025994"></i><i style="background:#025894"></i><i style="background:#025694"></i><i style="background:#025594"></i><i style="background:#025394"></i><i style="background:#025294"></i><i style="background:#025094"></i><i style="background:#024f94"></i><i style="background:#024d94"></i><i style="background:#034c95"></i><i style="background:#034b96"></i><i style="background:#034a9a"></i><i style="background:#034a9f"></i><i style="background:#044aa6"></i><i style="background:#044aac"></i><i style="background:#044aaf"></i><i style="background:#0448ac"></i><i style="background:#0445a4"></i><i style="background:#034099"></i><i style="background:#033a8d"></i><i style="background:#033483"></i><i style="background:#032f7b"></i><i style="background:#032e79"></i><i style="background:#022e78"></i><i style="background:#022d77"></i><i style="background:#022d76"></i><i style="background:#022d75"></i><i style="background:#022d74"></i><i style="background:#022d74"></i><i style="background:#022d74"></i><i style="background:#022d74"></i>
<i style="background:#006896"></i><i style="background:#006896"></i><i style="background:#006896"></i><i style="background:#006896"></i><i style="background:#006996"></i><i style="background:#006996"></i><i style="background:#006996"></i><i style="background:#006a97"></i><i style="background:#006a97"></i><i style="background:#006a97"></i><i style="background:#006b97"></i><i style="background:#006b97"></i><i style="background:#006b97"></i><i style="background:#006c97"></i><i style="background:#006c97"></i><i style="background:#006d98"></i><i style="background:#006d98"></i><i style="background:#006d98"></i><i style="background:#016e98"></i><i style="background:#016e98"></i><i style="background:#016d98"></i><i style="background:#016c97"></i><i style="background:#016c97"></i><i style="background:#016b97"></i><i style="background:#016a97"></i><i style="background:#016996"></i><i style="background:#016996"></i><i style="background:#016896"></i><i style="background:#016796"></i><i style="background:#016695"></i><i style="background:#016695"></i><i style="background:#016595"></i><i style="background:#016395"></i><i style="background:#016295"></i><i style="background:#016095"></i><i style="background:#015f94"></i><i style="background:#015e94"></i><i style="background:#015c94"></i><i style="background:#025b94"></i><i style="background:#025994"></i><i style="background:#025894"></i><i style="background:#025694"></i><i style="background:#025594"></i><i style="background:#025394"></i><i style="background:#025294"></i><i style="background:#025094"></i><i style="background:#024f94"></i><i style="background:#024d94"></i><i style="background:#034c95"></i><i style="background:#034b96"></i><i style="background:#034a9a"></i><i style="background:#034a9f"></i><i style="background:#044aa7"></i><i style="background:#044bad"></i><i style="background:#044bb0"></i><i style="background:#0449ad"></i><i style="background:#0445a5"></i><i style="background:#034099"></i><i style="background:#033a8d"></i><i style="background:#033483"></i><i style="background:#032f7b"></i><i style="background:#022d78"></i><i style="background:#022d76"></i><i style="background:#022c75"></i><i style="background:#022c74"></i><i style="background:#022b74"></i><i style="background:#022b73"></i><i style="background:#022b72"></i><i style="background:#022b72"></i><i style="background:#022b72"></i>
<i style="background:#006896"></i><i style="background:#006896"></i><i style="background:#006896"></i><i style="background:#006896"></i><i style="background:#006996"></i><i style="background:#006996"></i><i style="background:#006996"></i><i style="background:#006a97"></i><i style="background:#006a97"></i><i style="background:#006a97"></i><i style="background:#006b97"></i><i style="background:#006b97"></i><i style="background:#006b97"></i><i style="background:#006c97"></i><i style="background:#006c97"></i><i style="background:#006d98"></i><i style="background:#006d98"></i><i style="background:#006d98"></i><i style="background:#016e98"></i><i style="background:#016e98"></i><i style="background:#016d98"></i><i style="background:#016c97"></i><i style="background:#016c97"></i><i style="background:#016b97"></i><i style="background:#016a97"></i><i style="background:#016996"></i><i style="background:#016996"></i><i style="background:#016896"></i><i style="background:#016796"></i><i style="background:#016695"></i><i style="background:#016695"></i><i style="background:#016595"></i><i style="background:#016395"></i><i style="background:#016295"></i><i style="background:#016095"></i><i style="background:#015f94"></i><i style="background:#015e94"></i><i style="background:#015c94"></i><i style="background:#025b94"></i><i style="background:#025994"></i><i style="background:#025894"></i><i style="background:#025694"></i><i style="background:#025594"></i><i style="background:#025394"></i><i style="background:#025294"></i><i style="background:#025094"></i><i style="background:#024f94"></i><i style="background:#024d94"></i><i style="background:#034c95"></i><i style="background:#034b96"></i><i style="background:#034a9a"></i><i style="background:#034a9f"></i><i style="background:#044aa7"></i><i style="background:#044bad"></i><i style="background:#044bb0"></i><i style="background:#0449ad"></i><i style="background:#0445a5"></i><i style="background:#034099"></i><i style="background:#033a8d"></i><i style="background:#033483"></i><i style="background:#032f7b"></i><i style="background:#022d78"></i><i style="background:#022c75"></i><i style="background:#022b74"></i><i style="background:#022b73"></i><i style="background:#022a72"></i><i style="background:#022a71"></i><i style="background:#022a71"></i><i style="background:#022a71"></i><i style="background:#022a71"></i>
<i style="background:#006896"></i><i style="background:#006896"></i><i style="background:#006896"></i><i style="background:#006896"></i><i style="background:#006996"></i><i style="background:#006996"></i><i style="background:#006996"></i><i style="background:#006a97"></i><i style="background:#006a97"></i><i style="background:#006a97"></i><i style="background:#006b97"></i><i style="background:#006b97"></i><i style="background:#006b97"></i><i style="background:#006c97"></i><i style="background:#006c97"></i><i style="background:#006d98"></i><i style="background:#006d98"></i><i style="background:#006d98"></i><i style="background:#016e98"></i><i style="background:#016e98"></i><i style="background:#016d98"></i><i style="background:#016c97"></i><i style="background:#016c97"></i><i style="background:#016b97"></i><i style="background:#016a97"></i><i style="background:#016996"></i><i style="background:#016996"></i><i style="background:#016896"></i><i style="background:#016796"></i><i style="background:#016695"></i><i style="background:#016695"></i><i style="background:#016595"></i><i style="background:#016395"></i><i style="background:#016295"></i><i style="background:#016095"></i><i style="background:#015f94"></i><i style="background:#015e94"></i><i style="background:#015c94"></i><i style="background:#025b94"></i><i style="background:#025994"></i><i style="background:#025894"></i><i style="background:#025694"></i><i style="background:#025594"></i><i style="background:#025394"></i><i style="background:#025294"></i><i style="background:#025094"></i><i style="background:#024f94"></i><i style="background:#024d94"></i><i style="background:#034c95"></i><i style="background:#034b96"></i><i style="background:#034a9a"></i><i style="background:#034a9f"></i><i style="background:#044aa6"></i><i style="background:#044aac"></i><i style="background:#044aaf"></i><i style="background:#0448ac"></i><i style="background:#0445a4"></i><i style="background:#034099"></i><i style="background:#033a8d"></i><i style="background:#033483"></i><i style="background:#032f7b"></i><i style="background:#022d78"></i><i style="background:#022c75"></i><i style="background:#022b73"></i><i style="background:#022a72"></i><i style="background:#022971"></i><i style="background:#022970"></i><i style="background:#022970"></i><i style="background:#022970"></i><i style="background:#022970"></i>
<i style="background:#006896"></i><i style="background:#006896"></i><i style="background:#006896"></i><i style="background:#006896"></i><i style="background:#006996"></i><i style="background:#006996"></i><i style="background:#006996"></i><i style="background:#006a97"></i><i style="background:#006a97"></i><i style="background:#006a97"></i><i style="background:#006b97"></i><i style="background:#006b97"></i><i style="background:#006b97"></i><i style="background:#006c97"></i><i style="background:#006c97"></i><i style="background:#006d98"></i><i style="background:#006d98"></i><i style="background:#006d98"></i><i style="background:#016e98"></i><i style="background:#016e98"></i><i style="background:#016d98"></i><i style="background:#016c97"></i><i style="background:#016c97"></i><i style="background:#016b97"></i><i style="background:#016a97"></i><i style="background:#016996"></i><i style="background:#016996"></i><i style="background:#016896"></i><i style="background:#016796"></i><i style="background:#016695"></i><i style="background:#016695"></i><i style="background:#016595"></i><i style="background:#016395"></i><i style="background:#016295"></i><i style="background:#016095"></i><i style="background:#015f94"></i><i style="background:#015e94"></i><i style="background:#015c94"></i><i style="background:#025b94"></i><i style="background:#025994"></i><i style="background:#025894"></i><i style="background:#025694"></i><i style="background:#025594"></i><i style="background:#025394"></i><i style="background:#025294"></i><i style="background:#025094"></i><i style="background:#024f94"></i><i style="background:#024d94"></i><i style="background:#034c94"></i><i style="background:#034b96"></i><i style="background:#034a99"></i><i style="background:#034a9e"></i><i style="background:#044aa4"></i><i style="background:#044aaa"></i><i style="background:#044aad"></i><i style="background:#0448aa"></i><i style="background:#0444a2"></i><i style="background:#033f97"></i><i style="background:#03398c"></i><i style="background:#033482"></i><i style="background:#032f7b"></i><i style="background:#022d77"></i><i style="background:#022c75"></i><i style="background:#022b73"></i><i style="background:#022a72"></i><i style="background:#022970"></i><i style="background:#02286f"></i><i style="background:#02286f"></i><i style="background:#02286f"></i><i style="background:#02286f"></i>
<i style="background:#006896"></i><i style="background:#006896"></i><i style="background:#006896"></i><i style="background:#006896"></i><i style="background:#006996"></i><i style="background:#006996"></i><i style="background:#006996"></i><i style="background:#006a97"></i><i style="background:#006a97"></i><i style="background:#006a97"></i><i style="background:#006b97"></i><i style="background:#006b97"></i><i style="background:#006b97"></i><i style="background:#006c97"></i><i style="background:#006c97"></i><i style="background:#006d98"></i><i style="background:#006d98"></i><i style="background:#006d98"></i><i style="background:#016e98"></i><i style="background:#016e98"></i><i style="background:#016d98"></i><i style="background:#016c97"></i><i style="background:#016c97"></i><i style="background:#016b97"></i><i style="background:#016a97"></i><i style="background:#016996"></i><i style="background:#016996"></i><i style="background:#016896"></i><i style="background:#016796"></i><i style="background:#016695"></i><i style="background:#016695"></i><i style="background:#016595"></i><i style="background:#016395"></i><i style="background:#016295"></i><i style="background:#016095"></i><i style="background:#015f94"></i><i style="background:#015e94"></i><i style="background:#015c94"></i><i style="background:#025b94"></i><i style="background:#025994"></i><i style="background:#025894"></i><i style="background:#025694"></i><i style="background:#025594"></i><i style="background:#025394"></i><i style="background:#025294"></i><i style="background:#025094"></i><i style="background:#024f94"></i><i style="background:#024d94"></i><i style="background:#034c94"></i><i style="background:#034b96"></i><i style="background:#034a98"></i><i style="background:#03499d"></i><i style="background:#0349a3"></i><i style="background:#044aa8"></i><i style="background:#0449aa"></i><i style="background:#0447a7"></i><i style="background:#04439f"></i><i style="background:#033e95"></i><i style="background:#03398b"></i><i style="background:#033482"></i><i style="background:#032f7a"></i><i style="background:#022d77"></i><i style="background:#022c75"></i><i style="background:#022b73"></i><i style="background:#022a72"></i><i style="background:#022970"></i><i style="background:#02286e"></i><i style="background:#02276d"></i><i style="background:#02276d"></i><i style="background:#02276d"></i>
<i style="background:#006896"></i><i style="background:#006896"></i><i style="background:#006896"></i><i style="background:#006896"></i><i style="background:#006996"></i><i style="background:#006996"></i><i style="background:#006996"></i><i style="background:#006a97"></i><i style="background:#006a97"></i><i style="background:#006a97"></i><i style="background:#006b97"></i><i style="background:#006b97"></i><i style="background:#006b97"></i><i style="background:#006c97"></i><i style="background:#006c97"></i><i style="background:#006d98"></i><i style="background:#006d98"></i><i style="background:#006d98"></i><i style="background:#016e98"></i><i style="background:#016e98"></i><i style="background:#016d98"></i><i style="background:#016c97"></i><i style="background:#016c97"></i><i style="background:#016b97"></i><i style="background:#016a97"></i><i style="background:#016996"></i><i style="background:#016996"></i><i style="background:#016896"></i><i style="background:#016796"></i><i style="background:#016695"></i><i style="background:#016695"></i><i style="background:#016595"></i><i style="background:#016395"></i><i style="background:#016295"></i><i style="background:#016095"></i><i style="background:#015f94"></i><i style="background:#015e94"></i><i style="background:#015c94"></i><i style="background:#025b94"></i><i style="background:#025994"></i><i style="background:#025894"></i><i style="background:#025694"></i><i style="background:#025594"></i><i style="background:#025394"></i><i style="background:#025294"></i><i style="background:#025094"></i><i style="background:#024f94"></i><i style="background:#024d94"></i><i style="background:#024c94"></i><i style="background:#034b95"></i><i style="background:#034a98"></i><i style="background:#03499c"></i><i style="background:#0349a1"></i><i style="background:#0449a5"></i><i style="background:#0448a7"></i><i style="background:#0446a3"></i><i style="background:#04429c"></i><i style="background:#033e93"></i><i style="background:#033989"></i><i style="background:#033381"></i><i style="background:#032f7a"></i><i style="background:#022d75"></i><i style="background:#022c73"></i><i style="background:#022b72"></i><i style="background:#022a70"></i><i style="background:#02296f"></i><i style="background:#02286e"></i><i style="background:#02276d"></i><i style="background:#02276d"></i><i style="background:#02276d"></i>
<i style="background:#006896"></i><i style="background:#006896"></i><i style="background:#006896"></i><i style="background:#006896"></i><i style="background:#006996"></i><i style="background:#006996"></i><i style="background:#006996"></i><i style="background:#006a97"></i><i style="background:#006a97"></i><i style="background:#006a97"></i><i style="background:#006b97"></i><i style="background:#006b97"></i><i style="background:#006b97"></i><i style="background:#006c97"></i><i style="background:#006c97"></i><i style="background:#006d98"></i><i style="background:#006d98"></i><i style="background:#006d98"></i><i style="background:#016e98"></i><i style="background:#016e98"></i><i style="background:#016d98"></i><i style="background:#016c97"></i><i style="background:#016c97"></i><i style="background:#016b97"></i><i style="background:#016a97"></i><i style="background:#016996"></i><i style="background:#016996"></i><i style="background:#016896"></i><i style="background:#016796"></i><i style="background:#016695"></i><i style="background:#016695"></i><i style="background:#016595"></i><i style="background:#016395"></i><i style="background:#016295"></i><i style="background:#016095"></i><i style="background:#015f94"></i><i style="background:#015e94"></i><i style="background:#015c94"></i><i style="background:#025b94"></i><i style="background:#025994"></i><i style="background:#025894"></i><i style="background:#025694"></i><i style="background:#025594"></i><i style="background:#025394"></i><i style="background:#025294"></i><i style="background:#025094"></i><i style="background:#024f94"></i><i style="background:#024d94"></i><i style="background:#024c94"></i><i style="background:#034b95"></i><i style="background:#034a97"></i><i style="background:#03499a"></i><i style="background:#03499e"></i><i style="background:#0448a2"></i><i style="background:#0448a3"></i><i style="background:#0445a0"></i><i style="background:#033f95"></i><i style="background:#03398a"></i><i style="background:#033582"></i><i style="background:#03317c"></i><i style="background:#022e76"></i><i style="background:#022d74"></i><i style="background:#022b73"></i><i style="background:#022b72"></i><i style="background:#022a70"></i><i style="background:#02296f"></i><i style="background:#02286e"></i><i style="background:#02276d"></i><i style="background:#02276d"></i><i style="background:#02276d"></i>
<i style="background:#006896"></i><i style="background:#006896"></i><i style="background:#006896"></i><i style="background:#006896"></i><i style="background:#006996"></i><i style="background:#006996"></i><i style="background:#006996"></i><i style="background:#006a97"></i><i style="background:#006a97"></i><i style="background:#006a97"></i><i style="background:#006b97"></i><i style="background:#006b97"></i><i style="background:#006b97"></i><i style="background:#006c97"></i><i style="background:#006c97"></i><i style="background:#006d98"></i><i style="background:#006d98"></i><i style="background:#006d98"></i><i style="background:#016e98"></i><i style="background:#016e98"></i><i style="background:#016d98"></i><i style="background:#016c97"></i><i style="background:#016c97"></i><i style="background:#016b97"></i><i style="background:#016a97"></i><i style="background:#016996"></i><i style="background:#016996"></i><i style="background:#016896"></i><i style="background:#016796"></i><i style="background:#016695"></i><i style="background:#016695"></i><i style="background:#016595"></i><i style="background:#016395"></i><i style="background:#016295"></i><i style="background:#016095"></i><i style="background:#015f94"></i><i style="background:#015e94"></i><i style="background:#015c94"></i><i style="background:#025b94"></i><i style="background:#025994"></i><i style="background:#025894"></i><i style="background:#025694"></i><i style="background:#025594"></i><i style="background:#025394"></i><i style="background:#025294"></i><i style="background:#025094"></i><i style="background:#024f94"></i><i style="background:#024d94"></i><i style="background:#024c94"></i><i style="background:#034b95"></i><i style="background:#034a96"></i><i style="background:#034694"></i><i style="background:#03408f"></i><i style="background:#034093"></i><i style="background:#034094"></i><i style="background:#033e93"></i><i style="background:#033c8e"></i><i style="background:#033887"></i><i style="background:#033581"></i><i style="background:#03317b"></i><i style="background:#022e76"></i><i style="background:#022c74"></i><i style="background:#022b73"></i><i style="background:#022b72"></i><i style="background:#022a70"></i><i style="background:#02296f"></i><i style="background:#02286e"></i><i style="background:#02276d"></i><i style="background:#02276d"></i><i style="background:#02276d"></i>
<i style="background:#006896"></i><i style="background:#006896"></i><i style="background:#006896"></i><i style="background:#006896"></i><i style="background:#006996"></i><i style="background:#006996"></i><i style="background:#006996"></i><i style="background:#006a97"></i><i style="background:#006a97"></i><i style="background:#006a97"></i><i style="background:#006b97"></i><i style="background:#006b97"></i><i style="background:#006b97"></i><i style="background:#006c97"></i><i style="background:#006c97"></i><i style="background:#006d98"></i><i style="background:#006d98"></i><i style="background:#006d98"></i><i style="background:#016e98"></i><i style="background:#016e98"></i><i style="background:#016d98"></i><i style="background:#016c97"></i><i style="background:#016c97"></i><i style="background:#016b97"></i><i style="background:#016a97"></i><i style="background:#016996"></i><i style="background:#016996"></i><i style="background:#016896"></i><i style="background:#016796"></i><i style="background:#016695"></i><i style="background:#016695"></i><i style="background:#016595"></i><i style="background:#016395"></i><i style="background:#016295"></i><i style="background:#016095"></i><i style="background:#015f94"></i><i style="background:#015e94"></i><i style="background:#015c94"></i><i style="background:#025b94"></i><i style="background:#025994"></i><i style="background:#025894"></i><i style="background:#025694"></i><i style="background:#025594"></i><i style="background:#025394"></i><i style="background:#025294"></i><i style="background:#025094"></i><i style="background:#024d92"></i><i style="background:#024488"></i><i style="background:#024185"></i><i style="background:#023f85"></i><i style="background:#033f86"></i><i style="background:#033f89"></i><i style="background:#033f8c"></i><i style="background:#033f8f"></i><i style="background:#033f90"></i><i style="background:#033d8f"></i><i style="background:#033b8a"></i><i style="background:#033885"></i><i style="background:#03347f"></i><i style="background:#03317a"></i><i style="background:#022d76"></i><i style="background:#022c74"></i><i style="background:#022b73"></i><i style="background:#022b72"></i><i style="background:#022a70"></i><i style="background:#02296f"></i><i style="background:#02286e"></i><i style="background:#02276d"></i><i style="background:#02276d"></i><i style="background:#02276d"></i>
<i style="background:#006896"></i><i style="background:#006896"></i><i style="background:#006896"></i><i style="background:#006896"></i><i style="background:#006996"></i><i style="background:#006996"></i><i style="background:#006996"></i><i style="background:#006a97"></i><i style="background:#006a97"></i><i style="background:#006a97"></i><i style="background:#006b97"></i><i style="background:#006b97"></i><i style="background:#006b97"></i><i style="background:#006c97"></i><i style="background:#006c97"></i><i style="background:#006d98"></i><i style="background:#006d98"></i><i style="background:#006d98"></i><i style="background:#016e98"></i><i style="background:#016e98"></i><i style="background:#016d98"></i><i style="background:#016c97"></i><i style="background:#016c97"></i><i style="background:#016b97"></i><i style="background:#016a97"></i><i style="background:#016996"></i><i style="background:#016996"></i><i style="background:#016896"></i><i style="background:#016796"></i><i style="background:#016695"></i><i style="background:#016695"></i><i style="background:#016595"></i><i style="background:#016395"></i><i style="background:#016295"></i><i style="background:#016095"></i><i style="background:#015f94"></i><i style="background:#015e94"></i><i style="background:#015c94"></i><i style="background:#025b94"></i><i style="background:#025994"></i><i style="background:#025894"></i><i style="background:#025694"></i><i style="background:#024f8e"></i><i style="background:#024a8a"></i><i style="background:#024889"></i><i style="background:#024688"></i><i style="background:#024487"></i><i style="background:#024286"></i><i style="background:#024185"></i><i style="background:#023f85"></i><i style="background:#033f86"></i><i style="background:#033e87"></i><i style="background:#033e8a"></i><i style="background:#033e8c"></i><i style="background:#033d8d"></i><i style="background:#033c8b"></i><i style="background:#033a87"></i><i style="background:#033783"></i><i style="background:#03347e"></i><i style="background:#033079"></i><i style="background:#022d75"></i><i style="background:#022c74"></i><i style="background:#022b73"></i><i style="background:#022b72"></i><i style="background:#022a70"></i><i style="background:#02296f"></i><i style="background:#02286e"></i><i style="background:#02276d"></i><i style="background:#02276d"></i><i style="background:#02276d"></i>
<i style="background:#006896"></i><i style="background:#006896"></i><i style="background:#006896"></i><i style="background:#006896"></i><i style="background:#006996"></i><i style="background:#006996"></i><i style="background:#006996"></i><i style="background:#006a97"></i><i style="background:#006a97"></i><i style="background:#006a97"></i><i style="background:#006b97"></i><i style="background:#006b97"></i><i style="background:#006b97"></i><i style="background:#006c97"></i><i style="background:#006c97"></i><i style="background:#006d98"></i><i style="background:#006d98"></i><i style="background:#006d98"></i><i style="background:#016e98"></i><i style="background:#016e98"></i><i style="background:#016d98"></i><i style="background:#016c97"></i><i style="background:#016c97"></i><i style="background:#016b97"></i><i style="background:#016a97"></i><i style="background:#016996"></i><i style="background:#016996"></i><i style="background:#016896"></i><i style="background:#016796"></i><i style="background:#016695"></i><i style="background:#016695"></i><i style="background:#016595"></i><i style="background:#016395"></i><i style="background:#016295"></i><i style="background:#016095"></i><i style="background:#015f94"></i><i style="background:#015e94"></i><i style="background:#015a92"></i><i style="background:#02568f"></i><i style="background:#02538e"></i><i style="background:#02518d"></i><i style="background:#024f8c"></i><i style="background:#024c8b"></i><i style="background:#024a8a"></i><i style="background:#024889"></i><i style="background:#024688"></i><i style="background:#024487"></i><i style="background:#024286"></i><i style="background:#024185"></i><i style="background:#023f84"></i><i style="background:#023f85"></i><i style="background:#033e86"></i><i style="background:#033e88"></i><i style="background:#033d89"></i><i style="background:#033c8a"></i><i style="background:#033b88"></i><i style="background:#033985"></i><i style="background:#033681"></i><i style="background:#03337d"></i><i style="background:#033079"></i><i style="background:#022d75"></i><i style="background:#022c74"></i><i style="background:#022b73"></i><i style="background:#022b72"></i><i style="background:#022a70"></i><i style="background:#02296f"></i><i style="background:#02286e"></i><i style="background:#02276d"></i><i style="background:#02276d"></i><i style="background:#02276d"></i>
<i style="background:#006896"></i><i style="background:#006896"></i><i style="background:#006896"></i><i style="background:#006896"></i><i style="background:#006996"></i><i style="background:#006996"></i><i style="background:#006996"></i><i style="background:#006a97"></i><i style="background:#006a97"></i><i style="background:#006a97"></i><i style="background:#006b97"></i><i style="background:#006b97"></i><i style="background:#006b97"></i><i style="background:#006c97"></i><i style="background:#006c97"></i><i style="background:#006d98"></i><i style="background:#006d98"></i><i style="background:#006d98"></i><i style="background:#016e98"></i><i style="background:#016e98"></i><i style="background:#016d98"></i><i style="background:#016c97"></i><i style="background:#016c97"></i><i style="background:#016b97"></i><i style="background:#016a97"></i><i style="background:#016996"></i><i style="background:#016996"></i><i style="background:#016896"></i><i style="background:#016796"></i><i style="background:#016695"></i><i style="background:#016695"></i><i style="background:#016595"></i><i style="background:#016394"></i><i style="background:#015f93"></i><i style="background:#015d92"></i><i style="background:#015b91"></i><i style="background:#015991"></i><i style="background:#015790"></i><i style="background:#02568f"></i><i style="background:#02538e"></i><i style="background:#02518d"></i><i style="background:#024f8c"></i><i style="background:#024c8b"></i><i style="background:#024a8a"></i><i style="background:#024889"></i><i style="background:#024688"></i><i style="background:#024487"></i><i style="background:#024285"></i><i style="background:#024184"></i><i style="background:#023f84"></i><i style="background:#023e84"></i><i style="background:#033e85"></i><i style="background:#033d86"></i><i style="background:#033d87"></i><i style="background:#033c87"></i><i style="background:#033a86"></i><i style="background:#033883"></i><i style="background:#033680"></i><i style="background:#03337c"></i><i style="background:#033078"></i><i style="background:#022d75"></i><i style="background:#022c74"></i><i style="background:#022b73"></i><i style="background:#022a72"></i><i style="background:#022a70"></i><i style="background:#02296f"></i><i style="background:#02286e"></i><i style="background:#02276d"></i><i style="background:#02276d"></i><i style="background:#02276d"></i>
<i style="background:#006896"></i><i style="background:#006896"></i><i style="background:#006896"></i><i style="background:#006896"></i><i style="background:#006996"></i><i style="background:#006996"></i><i style="background:#006996"></i><i style="background:#006a97"></i><i style="background:#006a97"></i><i style="background:#006a97"></i><i style="background:#006b97"></i><i style="background:#006b97"></i><i style="background:#006b97"></i><i style="background:#006c97"></i><i style="background:#006c97"></i><i style="background:#006d98"></i><i style="background:#006d98"></i><i style="background:#006d98"></i><i style="background:#016e98"></i><i style="background:#016e98"></i><i style="background:#016d98"></i><i style="background:#016c97"></i><i style="background:#016c97"></i><i style="background:#016b97"></i><i style="background:#016a97"></i><i style="background:#016996"></i><i style="background:#016996"></i><i style="background:#016896"></i><i style="background:#016796"></i><i style="background:#016695"></i><i style="background:#016594"></i><i style="background:#016394"></i><i style="background:#016193"></i><i style="background:#015f92"></i><i style="background:#015d92"></i><i style="background:#015b91"></i><i style="background:#015991"></i><i style="background:#015790"></i><i style="background:#02568f"></i><i style="background:#02538e"></i><i style="background:#02518d"></i><i style="background:#024f8c"></i><i style="background:#024c8b"></i><i style="background:#024a8a"></i><i style="background:#024889"></i><i style="background:#024688"></i><i style="background:#024487"></i><i style="background:#024285"></i><i style="background:#024184"></i><i style="background:#023f84"></i><i style="background:#023e84"></i><i style="background:#033d84"></i><i style="background:#033d85"></i><i style="background:#033c86"></i><i style="background:#033b85"></i><i style="background:#033a84"></i><i style="background:#033881"></i><i style="background:#03357e"></i><i style="background:#03337b"></i><i style="background:#023078"></i><i style="background:#022d75"></i><i style="background:#022c74"></i><i style="background:#022b73"></i><i style="background:#022a72"></i><i style="background:#022a70"></i><i style="background:#02296f"></i><i style="background:#02286e"></i><i style="background:#02276d"></i><i style="background:#02276d"></i><i style="background:#02276d"></i>
<i style="background:#006896"></i><i style="background:#006896"></i><i style="background:#006896"></i><i style="background:#006896"></i><i style="background:#006996"></i><i style="background:#006996"></i><i style="background:#006996"></i><i style="background:#006a97"></i><i style="background:#006a97"></i><i style="background:#006a97"></i><i style="background:#006b97"></i><i style="background:#006b97"></i><i style="background:#006b97"></i><i style="background:#006c97"></i><i style="background:#006c97"></i><i style="background:#006d98"></i><i style="background:#006d98"></i><i style="background:#006d98"></i><i style="background:#016e98"></i><i style="background:#016e98"></i><i style="background:#016d98"></i><i style="background:#016c97"></i><i style="background:#016c97"></i><i style="background:#016b97"></i><i style="background:#016a97"></i><i style="background:#016996"></i><i style="background:#016996"></i><i style="background:#016896"></i><i style="background:#016796"></i><i style="background:#016695"></i><i style="background:#016594"></i><i style="background:#016394"></i><i style="background:#016193"></i><i style="background:#015f92"></i><i style="background:#015d92"></i><i style="background:#015b91"></i><i style="background:#015991"></i><i style="background:#015790"></i><i style="background:#02568f"></i><i style="background:#02538e"></i><i style="background:#02518d"></i><i style="background:#024f8c"></i><i style="background:#024c8b"></i><i style="background:#024a8a"></i><i style="background:#024889"></i><i style="background:#024688"></i><i style="background:#024487"></i><i style="background:#024285"></i><i style="background:#024084"></i><i style="background:#023f84"></i><i style="background:#023e84"></i><i style="background:#033d84"></i><i style="background:#033d84"></i><i style="background:#033c84"></i><i style="background:#033b84"></i><i style="background:#033983"></i><i style="background:#033780"></i><i style="background:#03357e"></i><i style="background:#03327b"></i><i style="background:#023078"></i><i style="background:#022d75"></i><i style="background:#022c74"></i><i style="background:#022b73"></i><i style="background:#022a72"></i><i style="background:#022a70"></i><i style="background:#02296f"></i><i style="background:#02286e"></i><i style="background:#02276d"></i><i style="background:#02276d"></i><i style="background:#02276d"></i>
<i style="background:#006896"></i><i style="background:#006896"></i><i style="background:#006896"></i><i style="background:#006896"></i><i style="background:#006996"></i><i style="background:#006996"></i><i style="background:#006996"></i><i style="background:#006a97"></i><i style="background:#006a97"></i><i style="background:#006a97"></i><i style="background:#006b97"></i><i style="background:#006b97"></i><i style="background:#006b97"></i><i style="background:#006c97"></i><i style="background:#006c97"></i><i style="background:#006d98"></i><i style="background:#006d98"></i><i style="background:#006d98"></i><i style="background:#016e98"></i><i style="background:#016e98"></i><i style="background:#016d98"></i><i style="background:#016c97"></i><i style="background:#016c97"></i><i style="background:#016b97"></i><i style="background:#016a97"></i><i style="background:#016996"></i><i style="background:#016996"></i><i style="background:#016896"></i><i style="background:#016796"></i><i style="background:#016695"></i><i style="background:#016594"></i><i style="background:#016394"></i><i style="background:#016193"></i><i style="background:#015f92"></i><i style="background:#015d92"></i><i style="background:#015b91"></i><i style="background:#015991"></i><i style="background:#015790"></i><i style="background:#02568f"></i><i style="background:#02538e"></i><i style="background:#02518d"></i><i style="background:#024f8c"></i><i style="background:#024c8b"></i><i style="background:#024a8a"></i><i style="background:#024889"></i><i style="background:#024688"></i><i style="background:#024487"></i><i style="background:#024285"></i><i style="background:#024084"></i><i style="background:#023f84"></i><i style="background:#023e83"></i><i style="background:#033d83"></i><i style="background:#033c84"></i><i style="background:#033b84"></i><i style="background:#033a83"></i><i style="background:#033982"></i><i style="background:#033780"></i><i style="background:#03357d"></i><i style="background:#03327a"></i><i style="background:#023078"></i><i style="background:#022d75"></i><i style="background:#022c74"></i><i style="background:#022b73"></i><i style="background:#022a72"></i><i style="background:#022a70"></i><i style="background:#02296f"></i><i style="background:#02286e"></i><i style="background:#02276d"></i><i style="background:#02276d"></i><i style="background:#02276d"></i>
<i style="background:#006896"></i><i style="background:#006896"></i><i style="background:#006896"></i><i style="background:#006896"></i><i style="background:#006996"></i><i style="background:#006996"></i><i style="background:#006996"></i><i style="background:#006a97"></i><i style="background:#006a97"></i><i style="background:#006a97"></i><i style="background:#006b97"></i><i style="background:#006b97"></i><i style="background:#006b97"></i><i style="background:#006c97"></i><i style="background:#006c97"></i><i style="background:#006d98"></i><i style="background:#006d98"></i><i style="background:#006d98"></i><i style="background:#016e98"></i><i style="background:#016e98"></i><i style="background:#016d98"></i><i style="background:#016c97"></i><i style="background:#016c97"></i><i style="background:#016b97"></i><i style="background:#016a97"></i><i style="background:#016996"></i><i style="background:#016996"></i><i style="background:#016896"></i><i style="background:#016796"></i><i style="background:#016695"></i><i style="background:#016594"></i><i style="background:#016394"></i><i style="background:#016193"></i><i style="background:#015f92"></i><i style="background:#015d92"></i><i style="background:#015b91"></i><i style="background:#015991"></i><i style="background:#015790"></i><i style="background:#02568f"></i><i style="background:#02538e"></i><i style="background:#02518d"></i><i style="background:#024f8c"></i><i style="background:#024c8b"></i><i style="background:#024a8a"></i><i style="background:#024889"></i><i style="background:#024688"></i><i style="background:#024487"></i><i style="background:#024285"></i><i style="background:#024084"></i><i style="background:#023f84"></i><i style="background:#023e83"></i><i style="background:#023d83"></i><i style="background:#033c83"></i><i style="background:#033b83"></i><i style="background:#033a83"></i><i style="background:#033981"></i><i style="background:#03377f"></i><i style="background:#03357d"></i><i style="background:#03327a"></i><i style="background:#023078"></i><i style="background:#022d75"></i><i style="background:#022c74"></i><i style="background:#022b73"></i><i style="background:#022a72"></i><i style="background:#022a70"></i><i style="background:#02296f"></i><i style="background:#02286e"></i><i style="background:#02276d"></i><i style="background:#02276d"></i><i style="background:#02276d"></i>
<i style="background:#006896"></i><i style="background:#006896"></i><i style="background:#006896"></i><i style="background:#006896"></i><i style="background:#006996"></i><i style="background:#006996"></i><i style="background:#006996"></i><i style="background:#006a97"></i><i style="background:#006a97"></i><i style="background:#006a97"></i><i style="background:#006b97"></i><i style="background:#006b97"></i><i style="background:#006b97"></i><i style="background:#006c97"></i><i style="background:#006c97"></i><i style="background:#006d98"></i><i style="background:#006d98"></i><i style="background:#006d98"></i><i style="background:#016e98"></i><i style="background:#016e98"></i><i style="background:#016d98"></i><i style="background:#016c97"></i><i style="background:#016c97"></i><i style="background:#016b97"></i><i style="background:#016a97"></i><i style="background:#016996"></i><i style="background:#016996"></i><i style="background:#016896"></i><i style="background:#016796"></i><i style="background:#016695"></i><i style="background:#016594"></i><i style="background:#016394"></i><i style="background:#016193"></i><i style="background:#015f92"></i><i style="background:#015d92"></i><i style="background:#015b91"></i><i style="background:#015991"></i><i style="background:#015790"></i><i style="background:#02568f"></i><i style="background:#02538e"></i><i style="background:#02518d"></i><i style="background:#024f8c"></i><i style="background:#024c8b"></i><i style="background:#024a8a"></i><i style="background:#024889"></i><i style="background:#024688"></i><i style="background:#024487"></i><i style="background:#024285"></i><i style="background:#024084"></i><i style="background:#023f84"></i><i style="background:#023e83"></i><i style="background:#023d83"></i><i style="background:#033c83"></i><i style="background:#033b83"></i><i style="background:#033a82"></i><i style="background:#033881"></i><i style="background:#03377f"></i><i style="background:#03357d"></i><i style="background:#03327a"></i><i style="background:#023077"></i><i style="background:#022d75"></i><i style="background:#022c74"></i><i style="background:#022b73"></i><i style="background:#022a72"></i><i style="background:#022a70"></i><i style="background:#02296f"></i><i style="background:#02286e"></i><i style="background:#02276d"></i><i style="background:#02276d"></i><i style="background:#02276d"></i>
<i style="background:#006896"></i><i style="background:#006896"></i><i style="background:#006896"></i><i style="background:#006896"></i><i style="background:#006996"></i><i style="background:#006996"></i><i style="background:#006996"></i><i style="background:#006a97"></i><i style="background:#006a97"></i><i style="background:#006a97"></i><i style="background:#006b97"></i><i style="background:#006b97"></i><i style="background:#006b97"></i><i style="background:#006c97"></i><i style="background:#006c97"></i><i style="background:#006d98"></i><i style="background:#006d98"></i><i style="background:#006d98"></i><i style="background:#016e98"></i><i style="background:#016e98"></i><i style="background:#016d98"></i><i style="background:#016c97"></i><i style="background:#016c97"></i><i style="background:#016b97"></i><i style="background:#016a97"></i><i style="background:#016996"></i><i style="background:#016996"></i><i style="background:#016896"></i><i style="background:#016796"></i><i style="background:#016695"></i><i style="background:#016594"></i><i style="background:#016394"></i><i style="background:#016193"></i><i style="background:#015f92"></i><i style="background:#015d92"></i><i style="background:#015b91"></i><i style="background:#015991"></i><i style="background:#015790"></i><i style="background:#02568f"></i><i style="background:#02538e"></i><i style="background:#02518d"></i><i style="background:#024f8c"></i><i style="background:#024c8b"></i><i style="background:#024a8a"></i><i style="background:#024889"></i><i style="background:#024688"></i><i style="background:#024487"></i><i style="background:#024285"></i><i style="background:#024084"></i><i style="background:#023f84"></i><i style="background:#023e83"></i><i style="background:#023d83"></i><i style="background:#033c83"></i><i style="background:#033b83"></i><i style="background:#033a82"></i><i style="background:#033881"></i><i style="background:#03377f"></i><i style="background:#03347c"></i><i style="background:#03327a"></i><i style="background:#023077"></i><i style="background:#022d75"></i><i style="background:#022c74"></i><i style="background:#022b73"></i><i style="background:#022a72"></i><i style="background:#022a70"></i><i style="background:#02296f"></i><i style="background:#02286e"></i><i style="background:#02276d"></i><i style="background:#02276d"></i><i style="background:#02276d"></i>
<i style="background:#006896"></i><i style="background:#006896"></i><i style="background:#006896"></i><i style="background:#006896"></i><i style="background:#006996"></i><i style="background:#006996"></i><i style="background:#006996"></i><i style="background:#006a97"></i><i style="background:#006a97"></i><i style="background:#006a97"></i><i style="background:#006b97"></i><i style="background:#006b97"></i><i style="background:#006b97"></i><i style="background:#006c97"></i><i style="background:#006c97"></i><i style="background:#006d98"></i><i style="background:#006d98"></i><i style="background:#006d98"></i><i style="background:#016e98"></i><i style="background:#016e98"></i><i style="background:#016d98"></i><i style="background:#016c97"></i><i style="background:#016c97"></i><i style="background:#016b97"></i><i style="background:#016a97"></i><i style="background:#016996"></i><i style="background:#016996"></i><i style="background:#016896"></i><i style="background:#016796"></i><i style="background:#016695"></i><i style="background:#016594"></i><i style="background:#016394"></i><i style="background:#016193"></i><i style="background:#015f92"></i><i style="background:#015d92"></i><i style="background:#015b91"></i><i style="background:#015991"></i><i style="background:#015790"></i><i style="background:#02568f"></i><i style="background:#02538e"></i><i style="background:#02518d"></i><i style="background:#024f8c"></i><i style="background:#024c8b"></i><i style="background:#024a8a"></i><i style="background:#024889"></i><i style="background:#024688"></i><i style="background:#024487"></i><i style="background:#024285"></i><i style="background:#024084"></i><i style="background:#023f84"></i><i style="background:#023e83"></i><i style="background:#023d83"></i><i style="background:#033c83"></i><i style="background:#033b83"></i><i style="background:#033a82"></i><i style="background:#033881"></i><i style="background:#03377f"></i><i style="background:#03347c"></i><i style="background:#03327a"></i><i style="background:#023077"></i><i style="background:#022d75"></i><i style="background:#022c74"></i><i style="background:#022b73"></i><i style="background:#022a72"></i><i style="background:#022a70"></i><i style="background:#02296f"></i><i style="background:#02286e"></i><i style="background:#02276d"></i><i style="background:#02276d"></i><i style="background:#02276d"></i>
<i style="background:#006896"></i><i style="background:#006896"></i><i style="background:#006896"></i><i style="background:#006896"></i><i style="background:#006996"></i><i style="background:#006996"></i><i style="background:#006996"></i><i style="background:#006a97"></i><i style="background:#006a97"></i><i style="background:#006a97"></i><i style="background:#006b97"></i><i style="background:#006b97"></i><i style="background:#006b97"></i><i style="background:#006c97"></i><i style="background:#006c97"></i><i style="background:#006d98"></i><i style="background:#006d98"></i><i style="background:#006d98"></i><i style="background:#016e98"></i><i style="background:#016e98"></i><i style="background:#016d98"></i><i style="background:#016c97"></i><i style="background:#016c97"></i><i style="background:#016b97"></i><i style="background:#016a97"></i><i style="background:#016996"></i><i style="background:#016996"></i><i style="background:#016896"></i><i style="background:#016796"></i><i style="background:#016695"></i><i style="background:#016594"></i><i style="background:#016394"></i><i style="background:#016193"></i><i style="background:#015f92"></i><i style="background:#015d92"></i><i style="background:#015b91"></i><i style="background:#015991"></i><i style="background:#015790"></i><i style="background:#02568f"></i><i style="background:#02538e"></i><i style="background:#02518d"></i><i style="background:#024f8c"></i><i style="background:#024c8b"></i><i style="background:#024a8a"></i><i style="background:#024889"></i><i style="background:#024688"></i><i style="background:#024487"></i><i style="background:#024285"></i><i style="background:#024084"></i><i style="background:#023f84"></i><i style="background:#023e83"></i><i style="background:#023d83"></i><i style="background:#033c83"></i><i style="background:#033b83"></i><i style="background:#033a82"></i><i style="background:#033881"></i><i style="background:#03377f"></i><i style="background:#03347c"></i><i style="background:#03327a"></i><i style="background:#023077"></i><i style="background:#022d75"></i><i style="background:#022c74"></i><i style="background:#022b73"></i><i style="background:#022a72"></i><i style="background:#022a70"></i><i style="background:#02296f"></i><i style="background:#02286e"></i><i style="background:#02276d"></i><i style="background:#02276d"></i><i style="background:#02276d"></i>
</div></div>
<div class="a" style="left:0;top:0;width:1280px;height:720px;overflow:hidden;clip-path:polygon(60px 0,1027px 283px,1027px 0)"><div style="position:absolute;left:-20px;top:-60px;width:1120px;height:420px;display:grid;grid-template-columns:repeat(56,20px);grid-auto-rows:20px;filter:blur(11px)">
<i style="background:#006496"></i><i style="background:#006496"></i><i style="background:#006496"></i><i style="background:#006496"></i><i style="background:#006496"></i><i style="background:#006395"></i><i style="background:#006294"></i><i style="background:#006194"></i><i style="background:#006193"></i><i style="background:#016093"></i><i style="background:#015f92"></i><i style="background:#015e91"></i><i style="background:#015e91"></i><i style="background:#015d90"></i><i style="background:#015c8f"></i><i style="background:#015b8f"></i><i style="background:#015a8e"></i><i style="background:#01598d"></i><i style="background:#01588c"></i><i style="background:#01578b"></i><i style="background:#01568a"></i><i style="background:#015589"></i><i style="background:#015489"></i><i style="background:#025388"></i><i style="background:#025287"></i><i style="background:#025187"></i><i style="background:#025086"></i><i style="background:#024f86"></i><i style="background:#024e85"></i><i style="background:#024d85"></i><i style="background:#024c84"></i><i style="background:#024b84"></i><i style="background:#024b83"></i><i style="background:#024a83"></i><i style="background:#024983"></i><i style="background:#024782"></i><i style="background:#024581"></i><i style="background:#024480"></i><i style="background:#02427f"></i><i style="background:#02417f"></i><i style="background:#02407f"></i><i style="background:#023e7e"></i><i style="background:#023d7e"></i><i style="background:#023c7d"></i><i style="background:#023a7d"></i><i style="background:#02397d"></i><i style="background:#02387c"></i><i style="background:#02367c"></i><i style="background:#03357c"></i><i style="background:#03347b"></i><i style="background:#03327b"></i><i style="background:#03317b"></i><i style="background:#032f7b"></i><i style="background:#032e7b"></i><i style="background:#032d7a"></i><i style="background:#032b7a"></i>
<i style="background:#006496"></i><i style="background:#006496"></i><i style="background:#006496"></i><i style="background:#006496"></i><i style="background:#006496"></i><i style="background:#006395"></i><i style="background:#006294"></i><i style="background:#006194"></i><i style="background:#006193"></i><i style="background:#016093"></i><i style="background:#015f92"></i><i style="background:#015e91"></i><i style="background:#015e91"></i><i style="background:#015d90"></i><i style="background:#015c8f"></i><i style="background:#015b8f"></i><i style="background:#015a8e"></i><i style="background:#01598d"></i><i style="background:#01588c"></i><i style="background:#01578b"></i><i style="background:#01568a"></i><i style="background:#015589"></i><i style="background:#015489"></i><i style="background:#025388"></i><i style="background:#025287"></i><i style="background:#025187"></i><i style="background:#025086"></i><i style="background:#024f86"></i><i style="background:#024e85"></i><i style="background:#024d85"></i><i style="background:#024c84"></i><i style="background:#024b84"></i><i style="background:#024b83"></i><i style="background:#024a83"></i><i style="background:#024983"></i><i style="background:#024782"></i><i style="background:#024581"></i><i style="background:#024480"></i><i style="background:#02427f"></i><i style="background:#02417f"></i><i style="background:#02407f"></i><i style="background:#023e7e"></i><i style="background:#023d7e"></i><i style="background:#023c7d"></i><i style="background:#023a7d"></i><i style="background:#02397d"></i><i style="background:#02387c"></i><i style="background:#02367c"></i><i style="background:#03357c"></i><i style="background:#03347b"></i><i style="background:#03327b"></i><i style="background:#03317b"></i><i style="background:#032f7b"></i><i style="background:#032e7b"></i><i style="background:#032d7a"></i><i style="background:#032b7a"></i>
<i style="background:#006496"></i><i style="background:#006496"></i><i style="background:#006496"></i><i style="background:#006496"></i><i style="background:#006496"></i><i style="background:#006395"></i><i style="background:#006294"></i><i style="background:#006194"></i><i style="background:#006193"></i><i style="background:#016093"></i><i style="background:#015f92"></i><i style="background:#015e91"></i><i style="background:#015e91"></i><i style="background:#015d90"></i><i style="background:#015c8f"></i><i style="background:#015b8f"></i><i style="background:#015a8e"></i><i style="background:#01598d"></i><i style="background:#01588c"></i><i style="background:#01578b"></i><i style="background:#01568a"></i><i style="background:#015589"></i><i style="background:#015489"></i><i style="background:#025388"></i><i style="background:#025287"></i><i style="background:#025187"></i><i style="background:#025086"></i><i style="background:#024f86"></i><i style="background:#024e85"></i><i style="background:#024d85"></i><i style="background:#024c84"></i><i style="background:#024b84"></i><i style="background:#024b83"></i><i style="background:#024a83"></i><i style="background:#024983"></i><i style="background:#024782"></i><i style="background:#024581"></i><i style="background:#024480"></i><i style="background:#02427f"></i><i style="background:#02417f"></i><i style="background:#02407f"></i><i style="background:#023e7e"></i><i style="background:#023d7e"></i><i style="background:#023c7d"></i><i style="background:#023a7d"></i><i style="background:#02397d"></i><i style="background:#02387c"></i><i style="background:#02367c"></i><i style="background:#03357c"></i><i style="background:#03347b"></i><i style="background:#03327b"></i><i style="background:#03317b"></i><i style="background:#032f7b"></i><i style="background:#032e7b"></i><i style="background:#032d7a"></i><i style="background:#032b7a"></i>
<i style="background:#006496"></i><i style="background:#006496"></i><i style="background:#006496"></i><i style="background:#006496"></i><i style="background:#006496"></i><i style="background:#006396"></i><i style="background:#006395"></i><i style="background:#006295"></i><i style="background:#006194"></i><i style="background:#016193"></i><i style="background:#016093"></i><i style="background:#015f92"></i><i style="background:#015e92"></i><i style="background:#015e91"></i><i style="background:#015d90"></i><i style="background:#015c90"></i><i style="background:#015b8f"></i><i style="background:#015a8e"></i><i style="background:#01598d"></i><i style="background:#01588c"></i><i style="background:#01578b"></i><i style="background:#01558a"></i><i style="background:#015489"></i><i style="background:#025389"></i><i style="background:#025288"></i><i style="background:#025187"></i><i style="background:#025187"></i><i style="background:#025087"></i><i style="background:#024f86"></i><i style="background:#024e86"></i><i style="background:#024d85"></i><i style="background:#024c85"></i><i style="background:#024b84"></i><i style="background:#024a84"></i><i style="background:#024a83"></i><i style="background:#024883"></i><i style="background:#024682"></i><i style="background:#024481"></i><i style="background:#024380"></i><i style="background:#02417f"></i><i style="background:#02407f"></i><i style="background:#023e7e"></i><i style="background:#023d7e"></i><i style="background:#023c7d"></i><i style="background:#023a7d"></i><i style="background:#02397d"></i><i style="background:#02387c"></i><i style="background:#02367c"></i><i style="background:#03357c"></i><i style="background:#03347b"></i><i style="background:#03327b"></i><i style="background:#03317b"></i><i style="background:#032f7b"></i><i style="background:#032e7b"></i><i style="background:#032d7a"></i><i style="background:#032b7a"></i>
<i style="background:#006496"></i><i style="background:#006496"></i><i style="background:#006496"></i><i style="background:#006496"></i><i style="background:#006496"></i><i style="background:#006396"></i><i style="background:#006396"></i><i style="background:#006396"></i><i style="background:#006296"></i><i style="background:#016295"></i><i style="background:#016195"></i><i style="background:#016094"></i><i style="background:#016093"></i><i style="background:#015f93"></i><i style="background:#015e92"></i><i style="background:#015d91"></i><i style="background:#015c91"></i><i style="background:#015b90"></i><i style="background:#015a8f"></i><i style="background:#01598e"></i><i style="background:#01588d"></i><i style="background:#01578c"></i><i style="background:#01568b"></i><i style="background:#02558a"></i><i style="background:#02548a"></i><i style="background:#025389"></i><i style="background:#025289"></i><i style="background:#025188"></i><i style="background:#025088"></i><i style="background:#024f88"></i><i style="background:#024e87"></i><i style="background:#024e87"></i><i style="background:#024d86"></i><i style="background:#024c86"></i><i style="background:#024b85"></i><i style="background:#024984"></i><i style="background:#024784"></i><i style="background:#024683"></i><i style="background:#024482"></i><i style="background:#024281"></i><i style="background:#024180"></i><i style="background:#023f7f"></i><i style="background:#023d7e"></i><i style="background:#023c7d"></i><i style="background:#023a7d"></i><i style="background:#02397d"></i><i style="background:#02387c"></i><i style="background:#02367c"></i><i style="background:#03357c"></i><i style="background:#03347b"></i><i style="background:#03327b"></i><i style="background:#03317b"></i><i style="background:#032f7b"></i><i style="background:#032e7b"></i><i style="background:#032d7a"></i><i style="background:#032b7a"></i>
<i style="background:#006496"></i><i style="background:#006496"></i><i style="background:#006496"></i><i style="background:#006496"></i><i style="background:#006496"></i><i style="background:#006396"></i><i style="background:#006396"></i><i style="background:#006396"></i><i style="background:#006296"></i><i style="background:#016296"></i><i style="background:#016295"></i><i style="background:#016195"></i><i style="background:#016195"></i><i style="background:#016095"></i><i style="background:#015f94"></i><i style="background:#015f93"></i><i style="background:#015e92"></i><i style="background:#015c92"></i><i style="background:#015b91"></i><i style="background:#015a90"></i><i style="background:#01598f"></i><i style="background:#01588e"></i><i style="background:#01578d"></i><i style="background:#02568c"></i><i style="background:#02558c"></i><i style="background:#02548b"></i><i style="background:#02538b"></i><i style="background:#02528a"></i><i style="background:#02518a"></i><i style="background:#025189"></i><i style="background:#025089"></i><i style="background:#024f88"></i><i style="background:#024e88"></i><i style="background:#024d88"></i><i style="background:#024c87"></i><i style="background:#024b86"></i><i style="background:#024985"></i><i style="background:#024785"></i><i style="background:#024584"></i><i style="background:#024483"></i><i style="background:#024282"></i><i style="background:#024081"></i><i style="background:#023f80"></i><i style="background:#023d7f"></i><i style="background:#023b7e"></i><i style="background:#02397d"></i><i style="background:#02387d"></i><i style="background:#02367c"></i><i style="background:#03357c"></i><i style="background:#03347b"></i><i style="background:#03327b"></i><i style="background:#03317b"></i><i style="background:#032f7b"></i><i style="background:#032e7b"></i><i style="background:#032d7a"></i><i style="background:#032b7a"></i>
<i style="background:#006496"></i><i style="background:#006496"></i><i style="background:#006496"></i><i style="background:#006496"></i><i style="background:#006496"></i><i style="background:#006396"></i><i style="background:#006396"></i><i style="background:#006396"></i><i style="background:#006296"></i><i style="background:#016296"></i><i style="background:#016295"></i><i style="background:#016195"></i><i style="background:#016195"></i><i style="background:#016195"></i><i style="background:#016095"></i><i style="background:#016095"></i><i style="background:#015f94"></i><i style="background:#015e93"></i><i style="background:#015d93"></i><i style="background:#015c92"></i><i style="background:#015b91"></i><i style="background:#015a90"></i><i style="background:#01588f"></i><i style="background:#02578e"></i><i style="background:#02568d"></i><i style="background:#02558d"></i><i style="background:#02558d"></i><i style="background:#02548c"></i><i style="background:#02538c"></i><i style="background:#02528b"></i><i style="background:#02518b"></i><i style="background:#02508a"></i><i style="background:#024f8a"></i><i style="background:#024e89"></i><i style="background:#024e89"></i><i style="background:#024c88"></i><i style="background:#024a87"></i><i style="background:#024886"></i><i style="background:#024785"></i><i style="background:#024585"></i><i style="background:#024384"></i><i style="background:#024283"></i><i style="background:#024082"></i><i style="background:#023e81"></i><i style="background:#023d80"></i><i style="background:#023b7f"></i><i style="background:#02397e"></i><i style="background:#02377e"></i><i style="background:#03367d"></i><i style="background:#03347c"></i><i style="background:#03327b"></i><i style="background:#03317b"></i><i style="background:#032f7b"></i><i style="background:#032e7b"></i><i style="background:#032d7a"></i><i style="background:#032b7a"></i>
<i style="background:#006496"></i><i style="background:#006496"></i><i style="background:#006496"></i><i style="background:#006496"></i><i style="background:#006496"></i><i style="background:#006396"></i><i style="background:#006396"></i><i style="background:#006396"></i><i style="background:#006296"></i><i style="background:#016296"></i><i style="background:#016295"></i><i style="background:#016195"></i><i style="background:#016195"></i><i style="background:#016195"></i><i style="background:#016095"></i><i style="background:#016095"></i><i style="background:#015f95"></i><i style="background:#015e94"></i><i style="background:#015e94"></i><i style="background:#015d93"></i><i style="background:#015c93"></i><i style="background:#015b92"></i><i style="background:#015a91"></i><i style="background:#025990"></i><i style="background:#02588f"></i><i style="background:#02578f"></i><i style="background:#02568e"></i><i style="background:#02558e"></i><i style="background:#02548e"></i><i style="background:#02538d"></i><i style="background:#02528d"></i><i style="background:#02528c"></i><i style="background:#02518c"></i><i style="background:#02508b"></i><i style="background:#024f8b"></i><i style="background:#024d8a"></i><i style="background:#024c89"></i><i style="background:#024a88"></i><i style="background:#024887"></i><i style="background:#024686"></i><i style="background:#024586"></i><i style="background:#024385"></i><i style="background:#024184"></i><i style="background:#024083"></i><i style="background:#023e82"></i><i style="background:#023c81"></i><i style="background:#023a80"></i><i style="background:#02397f"></i><i style="background:#03377e"></i><i style="background:#03357e"></i><i style="background:#03337d"></i><i style="background:#03327c"></i><i style="background:#03307b"></i><i style="background:#032e7b"></i><i style="background:#032d7a"></i><i style="background:#032b7a"></i>
<i style="background:#006496"></i><i style="background:#006496"></i><i style="background:#006496"></i><i style="background:#006496"></i><i style="background:#006496"></i><i style="background:#006396"></i><i style="background:#006396"></i><i style="background:#006396"></i><i style="background:#006296"></i><i style="background:#016296"></i><i style="background:#016295"></i><i style="background:#016195"></i><i style="background:#016195"></i><i style="background:#016195"></i><i style="background:#016095"></i><i style="background:#016095"></i><i style="background:#015f95"></i><i style="background:#015e94"></i><i style="background:#015e94"></i><i style="background:#015d94"></i><i style="background:#015c93"></i><i style="background:#015c93"></i><i style="background:#015b93"></i><i style="background:#025a92"></i><i style="background:#025991"></i><i style="background:#025891"></i><i style="background:#025790"></i><i style="background:#025690"></i><i style="background:#02568f"></i><i style="background:#02558f"></i><i style="background:#02548e"></i><i style="background:#02538e"></i><i style="background:#02528e"></i><i style="background:#02518d"></i><i style="background:#02508d"></i><i style="background:#024f8c"></i><i style="background:#024d8b"></i><i style="background:#024b8a"></i><i style="background:#024a89"></i><i style="background:#024888"></i><i style="background:#024687"></i><i style="background:#024486"></i><i style="background:#024386"></i><i style="background:#024185"></i><i style="background:#023f84"></i><i style="background:#023e83"></i><i style="background:#023c82"></i><i style="background:#023a81"></i><i style="background:#033880"></i><i style="background:#03377f"></i><i style="background:#03357f"></i><i style="background:#03337e"></i><i style="background:#03317d"></i><i style="background:#032f7c"></i><i style="background:#032e7c"></i><i style="background:#032c7b"></i>
<i style="background:#006496"></i><i style="background:#006496"></i><i style="background:#006496"></i><i style="background:#006496"></i><i style="background:#006496"></i><i style="background:#006396"></i><i style="background:#006396"></i><i style="background:#006396"></i><i style="background:#006296"></i><i style="background:#016296"></i><i style="background:#016295"></i><i style="background:#016195"></i><i style="background:#016195"></i><i style="background:#016195"></i><i style="background:#016095"></i><i style="background:#016095"></i><i style="background:#015f95"></i><i style="background:#015e94"></i><i style="background:#015e94"></i><i style="background:#015d94"></i><i style="background:#015c93"></i><i style="background:#015c93"></i><i style="background:#015b93"></i><i style="background:#025a92"></i><i style="background:#025a92"></i><i style="background:#025992"></i><i style="background:#025992"></i><i style="background:#025892"></i><i style="background:#025791"></i><i style="background:#025691"></i><i style="background:#025590"></i><i style="background:#025490"></i><i style="background:#02538f"></i><i style="background:#02538f"></i><i style="background:#02528f"></i><i style="background:#02508e"></i><i style="background:#024e8d"></i><i style="background:#024d8c"></i><i style="background:#024b8b"></i><i style="background:#02498a"></i><i style="background:#024789"></i><i style="background:#024688"></i><i style="background:#024487"></i><i style="background:#024287"></i><i style="background:#024186"></i><i style="background:#023f85"></i><i style="background:#023d84"></i><i style="background:#023c83"></i><i style="background:#033a82"></i><i style="background:#033881"></i><i style="background:#033681"></i><i style="background:#033480"></i><i style="background:#03337f"></i><i style="background:#03317e"></i><i style="background:#032f7d"></i><i style="background:#032d7d"></i>
<i style="background:#006496"></i><i style="background:#006496"></i><i style="background:#006496"></i><i style="background:#006496"></i><i style="background:#006496"></i><i style="background:#006396"></i><i style="background:#006396"></i><i style="background:#006396"></i><i style="background:#006296"></i><i style="background:#016296"></i><i style="background:#016295"></i><i style="background:#016195"></i><i style="background:#016195"></i><i style="background:#016195"></i><i style="background:#016095"></i><i style="background:#016095"></i><i style="background:#015f95"></i><i style="background:#015e94"></i><i style="background:#015e94"></i><i style="background:#015d94"></i><i style="background:#015c93"></i><i style="background:#015c93"></i><i style="background:#015b93"></i><i style="background:#025a92"></i><i style="background:#025a92"></i><i style="background:#025992"></i><i style="background:#025992"></i><i style="background:#025892"></i><i style="background:#025892"></i><i style="background:#025793"></i><i style="background:#025792"></i><i style="background:#025692"></i><i style="background:#025591"></i><i style="background:#025491"></i><i style="background:#025390"></i><i style="background:#02518f"></i><i style="background:#02508f"></i><i style="background:#024e8e"></i><i style="background:#024c8d"></i><i style="background:#024b8c"></i><i style="background:#02498b"></i><i style="background:#02478a"></i><i style="background:#024589"></i><i style="background:#024488"></i><i style="background:#024288"></i><i style="background:#024087"></i><i style="background:#023f86"></i><i style="background:#023d85"></i><i style="background:#033b84"></i><i style="background:#033983"></i><i style="background:#033782"></i><i style="background:#033682"></i><i style="background:#033481"></i><i style="background:#033280"></i><i style="background:#03307f"></i><i style="background:#032e7f"></i>
<i style="background:#006496"></i><i style="background:#006496"></i><i style="background:#006496"></i><i style="background:#006496"></i><i style="background:#006496"></i><i style="background:#006396"></i><i style="background:#006396"></i><i style="background:#006396"></i><i style="background:#006296"></i><i style="background:#016296"></i><i style="background:#016295"></i><i style="background:#016195"></i><i style="background:#016195"></i><i style="background:#016195"></i><i style="background:#016095"></i><i style="background:#016095"></i><i style="background:#015f95"></i><i style="background:#015e94"></i><i style="background:#015e94"></i><i style="background:#015d94"></i><i style="background:#015c93"></i><i style="background:#015c93"></i><i style="background:#015b93"></i><i style="background:#025a92"></i><i style="background:#025a92"></i><i style="background:#025992"></i><i style="background:#025992"></i><i style="background:#025892"></i><i style="background:#025892"></i><i style="background:#025793"></i><i style="background:#025793"></i><i style="background:#025693"></i><i style="background:#025693"></i><i style="background:#025593"></i><i style="background:#025492"></i><i style="background:#025391"></i><i style="background:#025190"></i><i style="background:#024f90"></i><i style="background:#024e8f"></i><i style="background:#024c8e"></i><i style="background:#024a8d"></i><i style="background:#02488c"></i><i style="background:#02478b"></i><i style="background:#02458a"></i><i style="background:#024389"></i><i style="background:#024288"></i><i style="background:#024088"></i><i style="background:#023e87"></i><i style="background:#033c86"></i><i style="background:#033b85"></i><i style="background:#033984"></i><i style="background:#033783"></i><i style="background:#033583"></i><i style="background:#033382"></i><i style="background:#033281"></i><i style="background:#033080"></i>
<i style="background:#006496"></i><i style="background:#006496"></i><i style="background:#006496"></i><i style="background:#006496"></i><i style="background:#006496"></i><i style="background:#006396"></i><i style="background:#006396"></i><i style="background:#006396"></i><i style="background:#006296"></i><i style="background:#016296"></i><i style="background:#016295"></i><i style="background:#016195"></i><i style="background:#016195"></i><i style="background:#016195"></i><i style="background:#016095"></i><i style="background:#016095"></i><i style="background:#015f95"></i><i style="background:#015e94"></i><i style="background:#015e94"></i><i style="background:#015d94"></i><i style="background:#015c93"></i><i style="background:#015c93"></i><i style="background:#015b93"></i><i style="background:#025a92"></i><i style="background:#025a92"></i><i style="background:#025992"></i><i style="background:#025992"></i><i style="background:#025892"></i><i style="background:#025892"></i><i style="background:#025793"></i><i style="background:#025793"></i><i style="background:#025693"></i><i style="background:#025693"></i><i style="background:#025593"></i><i style="background:#025593"></i><i style="background:#025493"></i><i style="background:#025292"></i><i style="background:#025191"></i><i style="background:#024f91"></i><i style="background:#024d90"></i><i style="background:#024c8f"></i><i style="background:#024a8e"></i><i style="background:#02488d"></i><i style="background:#02468c"></i><i style="background:#02458b"></i><i style="background:#02438a"></i><i style="background:#024189"></i><i style="background:#024089"></i><i style="background:#033e88"></i><i style="background:#033c87"></i><i style="background:#033a86"></i><i style="background:#033885"></i><i style="background:#033785"></i><i style="background:#033584"></i><i style="background:#033383"></i><i style="background:#033182"></i>
<i style="background:#006496"></i><i style="background:#006496"></i><i style="background:#006496"></i><i style="background:#006496"></i><i style="background:#006496"></i><i style="background:#006396"></i><i style="background:#006396"></i><i style="background:#006396"></i><i style="background:#006296"></i><i style="background:#016296"></i><i style="background:#016295"></i><i style="background:#016195"></i><i style="background:#016195"></i><i style="background:#016195"></i><i style="background:#016095"></i><i style="background:#016095"></i><i style="background:#015f95"></i><i style="background:#015e94"></i><i style="background:#015e94"></i><i style="background:#015d94"></i><i style="background:#015c93"></i><i style="background:#015c93"></i><i style="background:#015b93"></i><i style="background:#025a92"></i><i style="background:#025a92"></i><i style="background:#025992"></i><i style="background:#025992"></i><i style="background:#025892"></i><i style="background:#025892"></i><i style="background:#025793"></i><i style="background:#025793"></i><i style="background:#025693"></i><i style="background:#025693"></i><i style="background:#025593"></i><i style="background:#025593"></i><i style="background:#025493"></i><i style="background:#025292"></i><i style="background:#025192"></i><i style="background:#025092"></i><i style="background:#024e91"></i><i style="background:#024d91"></i><i style="background:#024b90"></i><i style="background:#02498f"></i><i style="background:#02488e"></i><i style="background:#02468d"></i><i style="background:#02448c"></i><i style="background:#02438b"></i><i style="background:#02418a"></i><i style="background:#033f8a"></i><i style="background:#033d89"></i><i style="background:#033c88"></i><i style="background:#033a87"></i><i style="background:#033886"></i><i style="background:#033686"></i><i style="background:#033485"></i><i style="background:#033384"></i>
<i style="background:#006496"></i><i style="background:#006496"></i><i style="background:#006496"></i><i style="background:#006496"></i><i style="background:#006496"></i><i style="background:#006396"></i><i style="background:#006396"></i><i style="background:#006396"></i><i style="background:#006296"></i><i style="background:#016296"></i><i style="background:#016295"></i><i style="background:#016195"></i><i style="background:#016195"></i><i style="background:#016195"></i><i style="background:#016095"></i><i style="background:#016095"></i><i style="background:#015f95"></i><i style="background:#015e94"></i><i style="background:#015e94"></i><i style="background:#015d94"></i><i style="background:#015c93"></i><i style="background:#015c93"></i><i style="background:#015b93"></i><i style="background:#025a92"></i><i style="background:#025a92"></i><i style="background:#025992"></i><i style="background:#025992"></i><i style="background:#025892"></i><i style="background:#025892"></i><i style="background:#025793"></i><i style="background:#025793"></i><i style="background:#025693"></i><i style="background:#025693"></i><i style="background:#025593"></i><i style="background:#025593"></i><i style="background:#025493"></i><i style="background:#025292"></i><i style="background:#025192"></i><i style="background:#025092"></i><i style="background:#024e91"></i><i style="background:#024d91"></i><i style="background:#024c91"></i><i style="background:#024b90"></i><i style="background:#024990"></i><i style="background:#02478f"></i><i style="background:#02468e"></i><i style="background:#02448d"></i><i style="background:#02428c"></i><i style="background:#03418b"></i><i style="background:#033f8b"></i><i style="background:#033d8a"></i><i style="background:#033b89"></i><i style="background:#033988"></i><i style="background:#033887"></i><i style="background:#033687"></i><i style="background:#033486"></i>
<i style="background:#006496"></i><i style="background:#006496"></i><i style="background:#006496"></i><i style="background:#006496"></i><i style="background:#006496"></i><i style="background:#006396"></i><i style="background:#006396"></i><i style="background:#006396"></i><i style="background:#006296"></i><i style="background:#016296"></i><i style="background:#016295"></i><i style="background:#016195"></i><i style="background:#016195"></i><i style="background:#016195"></i><i style="background:#016095"></i><i style="background:#016095"></i><i style="background:#015f95"></i><i style="background:#015e94"></i><i style="background:#015e94"></i><i style="background:#015d94"></i><i style="background:#015c93"></i><i style="background:#015c93"></i><i style="background:#015b93"></i><i style="background:#025a92"></i><i style="background:#025a92"></i><i style="background:#025992"></i><i style="background:#025992"></i><i style="background:#025892"></i><i style="background:#025892"></i><i style="background:#025793"></i><i style="background:#025793"></i><i style="background:#025693"></i><i style="background:#025693"></i><i style="background:#025593"></i><i style="background:#025593"></i><i style="background:#025493"></i><i style="background:#025292"></i><i style="background:#025192"></i><i style="background:#025092"></i><i style="background:#024e91"></i><i style="background:#024d91"></i><i style="background:#024c91"></i><i style="background:#024b90"></i><i style="background:#024990"></i><i style="background:#024890"></i><i style="background:#02478f"></i><i style="background:#02458f"></i><i style="background:#02448e"></i><i style="background:#03428d"></i><i style="background:#03408c"></i><i style="background:#033e8c"></i><i style="background:#033c8b"></i><i style="background:#033b8a"></i><i style="background:#033989"></i><i style="background:#033788"></i><i style="background:#033588"></i>
<i style="background:#006496"></i><i style="background:#006496"></i><i style="background:#006496"></i><i style="background:#006496"></i><i style="background:#006496"></i><i style="background:#006396"></i><i style="background:#006396"></i><i style="background:#006396"></i><i style="background:#006296"></i><i style="background:#016296"></i><i style="background:#016295"></i><i style="background:#016195"></i><i style="background:#016195"></i><i style="background:#016195"></i><i style="background:#016095"></i><i style="background:#016095"></i><i style="background:#015f95"></i><i style="background:#015e94"></i><i style="background:#015e94"></i><i style="background:#015d94"></i><i style="background:#015c93"></i><i style="background:#015c93"></i><i style="background:#015b93"></i><i style="background:#025a92"></i><i style="background:#025a92"></i><i style="background:#025992"></i><i style="background:#025992"></i><i style="background:#025892"></i><i style="background:#025892"></i><i style="background:#025793"></i><i style="background:#025793"></i><i style="background:#025693"></i><i style="background:#025693"></i><i style="background:#025593"></i><i style="background:#025593"></i><i style="background:#025493"></i><i style="background:#025292"></i><i style="background:#025192"></i><i style="background:#025092"></i><i style="background:#024e91"></i><i style="background:#024d91"></i><i style="background:#024c91"></i><i style="background:#024b90"></i><i style="background:#024990"></i><i style="background:#024890"></i><i style="background:#02478f"></i><i style="background:#02458f"></i><i style="background:#02448f"></i><i style="background:#03438e"></i><i style="background:#03418e"></i><i style="background:#03408d"></i><i style="background:#033e8d"></i><i style="background:#033c8c"></i><i style="background:#033a8b"></i><i style="background:#03388a"></i><i style="background:#03378a"></i>
<i style="background:#006496"></i><i style="background:#006496"></i><i style="background:#006496"></i><i style="background:#006496"></i><i style="background:#006496"></i><i style="background:#006396"></i><i style="background:#006396"></i><i style="background:#006396"></i><i style="background:#006296"></i><i style="background:#016296"></i><i style="background:#016295"></i><i style="background:#016195"></i><i style="background:#016195"></i><i style="background:#016195"></i><i style="background:#016095"></i><i style="background:#016095"></i><i style="background:#015f95"></i><i style="background:#015e94"></i><i style="background:#015e94"></i><i style="background:#015d94"></i><i style="background:#015c93"></i><i style="background:#015c93"></i><i style="background:#015b93"></i><i style="background:#025a92"></i><i style="background:#025a92"></i><i style="background:#025992"></i><i style="background:#025992"></i><i style="background:#025892"></i><i style="background:#025892"></i><i style="background:#025793"></i><i style="background:#025793"></i><i style="background:#025693"></i><i style="background:#025693"></i><i style="background:#025593"></i><i style="background:#025593"></i><i style="background:#025493"></i><i style="background:#025292"></i><i style="background:#025192"></i><i style="background:#025092"></i><i style="background:#024e91"></i><i style="background:#024d91"></i><i style="background:#024c91"></i><i style="background:#024b90"></i><i style="background:#024990"></i><i style="background:#024890"></i><i style="background:#02478f"></i><i style="background:#02458f"></i><i style="background:#02448f"></i><i style="background:#03438e"></i><i style="background:#03418e"></i><i style="background:#03408e"></i><i style="background:#033e8d"></i><i style="background:#033d8d"></i><i style="background:#033c8d"></i><i style="background:#033a8c"></i><i style="background:#03388b"></i>
<i style="background:#006496"></i><i style="background:#006496"></i><i style="background:#006496"></i><i style="background:#006496"></i><i style="background:#006496"></i><i style="background:#006396"></i><i style="background:#006396"></i><i style="background:#006396"></i><i style="background:#006296"></i><i style="background:#016296"></i><i style="background:#016295"></i><i style="background:#016195"></i><i style="background:#016195"></i><i style="background:#016195"></i><i style="background:#016095"></i><i style="background:#016095"></i><i style="background:#015f95"></i><i style="background:#015e94"></i><i style="background:#015e94"></i><i style="background:#015d94"></i><i style="background:#015c93"></i><i style="background:#015c93"></i><i style="background:#015b93"></i><i style="background:#025a92"></i><i style="background:#025a92"></i><i style="background:#025992"></i><i style="background:#025992"></i><i style="background:#025892"></i><i style="background:#025892"></i><i style="background:#025793"></i><i style="background:#025793"></i><i style="background:#025693"></i><i style="background:#025693"></i><i style="background:#025593"></i><i style="background:#025593"></i><i style="background:#025493"></i><i style="background:#025292"></i><i style="background:#025192"></i><i style="background:#025092"></i><i style="background:#024e91"></i><i style="background:#024d91"></i><i style="background:#024c91"></i><i style="background:#024b90"></i><i style="background:#024990"></i><i style="background:#024890"></i><i style="background:#02478f"></i><i style="background:#02458f"></i><i style="background:#02448f"></i><i style="background:#03438e"></i><i style="background:#03418e"></i><i style="background:#03408e"></i><i style="background:#033e8d"></i><i style="background:#033d8d"></i><i style="background:#033c8d"></i><i style="background:#033a8d"></i><i style="background:#03398c"></i>
<i style="background:#006496"></i><i style="background:#006496"></i><i style="background:#006496"></i><i style="background:#006496"></i><i style="background:#006496"></i><i style="background:#006396"></i><i style="background:#006396"></i><i style="background:#006396"></i><i style="background:#006296"></i><i style="background:#016296"></i><i style="background:#016295"></i><i style="background:#016195"></i><i style="background:#016195"></i><i style="background:#016195"></i><i style="background:#016095"></i><i style="background:#016095"></i><i style="background:#015f95"></i><i style="background:#015e94"></i><i style="background:#015e94"></i><i style="background:#015d94"></i><i style="background:#015c93"></i><i style="background:#015c93"></i><i style="background:#015b93"></i><i style="background:#025a92"></i><i style="background:#025a92"></i><i style="background:#025992"></i><i style="background:#025992"></i><i style="background:#025892"></i><i style="background:#025892"></i><i style="background:#025793"></i><i style="background:#025793"></i><i style="background:#025693"></i><i style="background:#025693"></i><i style="background:#025593"></i><i style="background:#025593"></i><i style="background:#025493"></i><i style="background:#025292"></i><i style="background:#025192"></i><i style="background:#025092"></i><i style="background:#024e91"></i><i style="background:#024d91"></i><i style="background:#024c91"></i><i style="background:#024b90"></i><i style="background:#024990"></i><i style="background:#024890"></i><i style="background:#02478f"></i><i style="background:#02458f"></i><i style="background:#02448f"></i><i style="background:#03438e"></i><i style="background:#03418e"></i><i style="background:#03408e"></i><i style="background:#033e8d"></i><i style="background:#033d8d"></i><i style="background:#033c8d"></i><i style="background:#033a8d"></i><i style="background:#03398c"></i>
<i style="background:#006496"></i><i style="background:#006496"></i><i style="background:#006496"></i><i style="background:#006496"></i><i style="background:#006496"></i><i style="background:#006396"></i><i style="background:#006396"></i><i style="background:#006396"></i><i style="background:#006296"></i><i style="background:#016296"></i><i style="background:#016295"></i><i style="background:#016195"></i><i style="background:#016195"></i><i style="background:#016195"></i><i style="background:#016095"></i><i style="background:#016095"></i><i style="background:#015f95"></i><i style="background:#015e94"></i><i style="background:#015e94"></i><i style="background:#015d94"></i><i style="background:#015c93"></i><i style="background:#015c93"></i><i style="background:#015b93"></i><i style="background:#025a92"></i><i style="background:#025a92"></i><i style="background:#025992"></i><i style="background:#025992"></i><i style="background:#025892"></i><i style="background:#025892"></i><i style="background:#025793"></i><i style="background:#025793"></i><i style="background:#025693"></i><i style="background:#025693"></i><i style="background:#025593"></i><i style="background:#025593"></i><i style="background:#025493"></i><i style="background:#025292"></i><i style="background:#025192"></i><i style="background:#025092"></i><i style="background:#024e91"></i><i style="background:#024d91"></i><i style="background:#024c91"></i><i style="background:#024b90"></i><i style="background:#024990"></i><i style="background:#024890"></i><i style="background:#02478f"></i><i style="background:#02458f"></i><i style="background:#02448f"></i><i style="background:#03438e"></i><i style="background:#03418e"></i><i style="background:#03408e"></i><i style="background:#033e8d"></i><i style="background:#033d8d"></i><i style="background:#033c8d"></i><i style="background:#033a8d"></i><i style="background:#03398c"></i>
</div></div>
<svg class="a" style="left:0;top:0" width="1280" height="720" viewBox="0 0 1280 720">
  <defs>
    <linearGradient id="pane" x1="0" y1="0" x2="1" y2="1">
      <stop offset="0" stop-color="#176c9e"/>
      <stop offset="1" stop-color="#14629a"/>
    </linearGradient>
    <filter id="b1" x="-20%" y="-20%" width="140%" height="140%"><feGaussianBlur stdDeviation="0.7"/></filter>
  </defs>
  <path d="M60,0 L1027,283" stroke="#8fd0e8" stroke-opacity="0.06" stroke-width="2"/>
  <linearGradient id="bl" x1="796" y1="0" x2="300" y2="0" gradientUnits="userSpaceOnUse"><stop offset="0" stop-color="#8fe0f0" stop-opacity="0.16"/><stop offset="1" stop-color="#8fe0f0" stop-opacity="0"/></linearGradient>
  <path d="M796,488 L300,556" stroke="url(#bl)" stroke-width="3" filter="url(#b1)"/>
  <linearGradient id="bw" x1="450" y1="0" x2="1280" y2="0" gradientUnits="userSpaceOnUse"><stop offset="0.0000" stop-color="#022864" stop-opacity="0"/><stop offset="0.0843" stop-color="#022864" stop-opacity="0"/><stop offset="0.3133" stop-color="#022864" stop-opacity="0.1"/><stop offset="0.5663" stop-color="#022864" stop-opacity="0.33"/><stop offset="0.6952" stop-color="#022864" stop-opacity="0.35"/><stop offset="0.9036" stop-color="#022864" stop-opacity="0.1"/><stop offset="1.0000" stop-color="#022864" stop-opacity="0.05"/></linearGradient>
  <filter id="b4" x="-10%" y="-10%" width="120%" height="120%"><feGaussianBlur stdDeviation="4"/></filter>
  
  <!-- logo panes -->
  <path d="M796,398 H1027 V404 H796 Z M894,301 H900 V503 H894 Z" fill="#0a4a94" opacity="0.6"/>
  <g fill="url(#pane)">
    <polygon points="796,314 894,301 894,398 796,398"/>
    <polygon points="900,300 1027,283 1027,398 900,398"/>
    <polygon points="796,404 894,404 894,499 796,488"/>
    <polygon points="900,404 1027,404 1027,519 900,503"/>
  </g>
  <g fill="none" stroke="#3fbea8" stroke-width="1.2" stroke-opacity="0.75" filter="url(#b1)">
    <path d="M796,398 V314 M894,301 V398 M900,398 V300 M1027,283 V398"/>
    <path d="M796,404 V488 M894,499 V404 M900,404 V503 M1027,519 V404"/>
  </g>
  <g fill="none" stroke="#3fbea8" stroke-width="1.1" stroke-opacity="0.55">
    <path d="M796,314 L894,301 M900,300 L1027,283 M796,488 L894,499 M900,503 L1027,519"/>
  </g>
  <g fill="none" stroke="#3fbea8" stroke-width="1" stroke-opacity="0.35">
    <path d="M796,398 V314 M1027,283 V398 M796,404 V488 M1027,519 V404"/>
  </g>
  <g fill="none" stroke="#3fbea8" stroke-width="1" stroke-opacity="0.2">
    <path d="M796,398 H894 M900,398 H1027 M796,404 H894 M900,404 H1027"/>
  </g>
  <path d="M796,486 L1027,452" stroke="#5fd0c0" stroke-opacity="0.22" stroke-width="1"/>
</svg>

<!-- New desktop button -->
<div class="a" style="left:33px;top:30px;width:107px;height:41px;border:2px solid #a6cbe0;background:rgba(125,178,210,.36)"></div>
<svg class="a" style="left:43px;top:44px" width="13" height="13"><path d="M6.5 0.5V12.5M0.5 6.5H12.5" stroke="#fff" stroke-width="1.5"/></svg>
<div class="t" style="left:63px;top:44.6px;font-size:11.2px">New desktop</div>
<!-- cursor -->
<svg class="a" style="left:89px;top:63px" width="14" height="20" viewBox="0 0 14 20"><path d="M1 1 L1 16 L4.6 12.6 L7.2 18.4 L9.4 17.4 L6.9 11.8 L11.8 11.8 Z" fill="#fff" stroke="#000" stroke-width="1" stroke-linejoin="round"/></svg>

<!-- search top right -->
<svg class="a" style="left:1210px;top:40px" width="30" height="30"><circle cx="18.4" cy="11.5" r="6.2" fill="none" stroke="#fff" stroke-width="1.7"/><path d="M14 16L6.4 23.6" stroke="#fff" stroke-width="1.7" stroke-linecap="round"/></svg>

<!-- timeline -->
<div class="t" style="left:1180px;top:85px;font-weight:bold;font-size:11.8px;-webkit-text-stroke:0.3px #fff">Now</div>
<svg class="a" style="left:1210px;top:80px" width="30" height="560"><circle cx="15.5" cy="14.4" r="8.6" fill="none" stroke="#fff" stroke-width="2"/><rect x="14.5" y="23" width="2.2" height="533" fill="#fff"/></svg>
<div class="t" style="left:1175px;top:624.3px;font-weight:bold;font-size:10.8px;-webkit-text-stroke:0.3px #fff">July 3</div>

<!-- ========== THUMB 1 : Microsoft Store ========== -->
<svg class="a" style="left:42px;top:96px" width="24" height="24" viewBox="0 0 24 24">
  <path d="M6.9 7 V5.8 A5 5 0 0 1 16.9 5.8 V7" fill="none" stroke="#e6f0f4" stroke-width="1.4"/>
  <rect x="1" y="7" width="21.8" height="16" rx="1" fill="#fff"/>
  <rect x="7" y="11" width="4.3" height="4.3" fill="#f25022"/><rect x="12.6" y="11" width="4.3" height="4.3" fill="#7fba00"/>
  <rect x="7" y="16.6" width="4.3" height="4.3" fill="#00a4ef"/><rect x="12.6" y="16.6" width="4.3" height="4.3" fill="#ffb900"/>
</svg>
<div class="t" style="left:73px;top:102.4px">Microsoft Store</div>
<div class="th" style="left:46px;top:123px;width:200px;height:157px;background:#f1f1f1">
  <div style="left:3.6px;top:3.0px;font:3.1px/3.7px 'Liberation Sans';color:#333;white-space:nowrap">Microsoft Store</div>
  <div style="left:165.60px;top:0.60px;width:10.40px;height:6.40px;background:#dedede"></div>
  <div style="left:168.50px;top:4.00px;width:4.50px;height:0.50px;background:#555"></div>
  <div style="left:180.00px;top:2.30px;width:3.80px;height:3.60px;background:transparent;border:0.5px solid #555"></div>
  <div style="left:191.5px;top:2.9px;font:3.4px/4.1px 'Liberation Sans';color:#555;white-space:nowrap">×</div>
  <div style="left:3.8px;top:12.6px;font:3.2px/3.8px 'Liberation Sans';color:#666;white-space:nowrap">←</div>
  <div style="left:15.5px;top:12.7px;font:3.1px/3.7px 'Liberation Sans';color:#444;white-space:nowrap">Home</div>
  <div style="left:31.3px;top:12.7px;font:3.1px/3.7px 'Liberation Sans';color:#444;white-space:nowrap">Apps</div>
  <div style="left:45.2px;top:12.7px;font:3.1px/3.7px 'Liberation Sans';color:#444;white-space:nowrap">Games</div>
  <div style="left:31.50px;top:18.70px;width:8.00px;height:0.80px;background:#5a9ae0"></div>
  <div style="left:143.5px;top:12.7px;font:3.2px/3.8px 'Liberation Sans';color:#555;white-space:nowrap">o</div>
  <div style="left:147.2px;top:12.8px;font:3.1px/3.7px 'Liberation Sans';color:#444;white-space:nowrap">Search</div>
  <div style="left:166.5px;top:12.6px;font:3.4px/4.1px 'Liberation Sans';color:#555;white-space:nowrap">↓</div>
  <div style="left:179.5px;top:12.8px;font:3px/3.6px 'Liberation Sans';color:#555;white-space:nowrap">· 1</div>
  <div style="left:190.5px;top:12.0px;font:bold 3.4px/4.1px 'Liberation Sans';color:#333;white-space:nowrap">···</div>
  <div style="left:6.30px;top:20.00px;width:124.40px;height:70.30px;background:linear-gradient(#70308a,#5a2474 55%,#481a5c)"></div>
  <svg style="left:54px;top:31.5px" width="30" height="28" viewBox="0 0 30 28"><path d="M2 4 L17 1 L17 27 L2 24 Z" fill="#dcdcdc"/><path d="M17 4.5 H27 V23.5 H17" fill="#efefef"/><path d="M18.5 8H25.5M18.5 11.6H25.5M18.5 15.2H25.5M18.5 18.8H25.5" stroke="#7b3f94" stroke-width="1.3"/><text x="4.3" y="18.5" font-size="13" font-weight="bold" fill="#6a2d85" font-family="Liberation Sans">N</text></svg>
  <div style="left:55.5px;top:71.9px;font:bold 4.6px/5.5px 'Liberation Sans';color:#fff;white-space:nowrap">OneNote</div>
  <div style="left:38.0px;top:79.5px;font:3px/3.6px 'Liberation Sans';color:#eee;white-space:nowrap">Capture and organize your notes across</div>
  <div style="left:65.5px;top:85.1px;font:3px/3.6px 'Liberation Sans';color:#eee;white-space:nowrap">Free</div>
  <div style="left:132.50px;top:20.00px;width:60.70px;height:34.40px;background:linear-gradient(#fdfdfd,#e4e4e4 40%,#9a9a9a)"></div>
  <div style="left:147.5px;top:27px;width:50px;height:10px;font:bold 10px/10px 'Liberation Sans';color:#d9141e;transform:scaleX(0.62) scaleY(0.85);transform-origin:0 0;white-space:nowrap">NETFLIX</div>
  <div style="left:157.5px;top:49.1px;font:3px/3.6px 'Liberation Sans';color:#fff;white-space:nowrap">Netflix</div>
  <div style="left:132.50px;top:56.00px;width:60.70px;height:34.30px;background:linear-gradient(160deg,#a8d8e8,#7ebdd4 35%,#5a9bb6 60%,#2f6680 85%,#254c60)"></div>
  <div style="left:144.00px;top:63.00px;width:10.00px;height:8.00px;background:rgba(255,255,255,.25);border-radius:3px"></div>
  <div style="left:166.00px;top:67.00px;width:12.00px;height:9.00px;background:rgba(255,255,255,.2);border-radius:3px"></div>
  <div style="left:137.00px;top:77.00px;width:5.00px;height:12.00px;background:rgba(20,40,60,.35)"></div>
  <div style="left:137.0px;top:85.4px;font:2.9px/3.5px 'Liberation Sans';color:#fff;white-space:nowrap">Microsoft Solitaire Collection</div>
  <div style="left:6.30px;top:92.00px;width:60.30px;height:17.30px;background:#fafafa"></div>
  <div style="left:6.30px;top:109.60px;width:60.30px;height:16.70px;background:#fafafa"></div>
  <div style="left:9.0px;top:98.3px;font:bold 3.6px/4.3px 'Liberation Sans';color:#333;white-space:nowrap">T</div>
  <div style="left:17.0px;top:98.6px;font:3px/3.6px 'Liberation Sans';color:#444;white-space:nowrap">Top apps</div>
  <div style="left:9.5px;top:116.4px;font:3.4px/4.1px 'Liberation Sans';color:#333;white-space:nowrap">|</div>
  <div style="left:17.0px;top:116.6px;font:3px/3.6px 'Liberation Sans';color:#444;white-space:nowrap">Featured</div>
  <div style="left:68.20px;top:92.00px;width:62.50px;height:34.30px;background:linear-gradient(90deg,#565656,#3a3a3a 18%,#1e1e1e 30%,#262626 82%,#6a6a6a)"></div>
  <div style="left:79.00px;top:93.00px;width:40.00px;height:24.00px;background:#e2e2e2"></div>
  <div style="left:81.00px;top:95.00px;width:36.00px;height:20.00px;background:linear-gradient(#f0f0f0,#d8d8d8)"></div>
  <div style="left:70.00px;top:95.00px;width:9.00px;height:22.00px;background:#b48a78;border-radius:4px"></div>
  <div style="left:118.00px;top:95.00px;width:9.00px;height:22.00px;background:#a87a68;border-radius:4px"></div>
  <div style="left:84.0px;top:120.2px;font:3px/3.6px 'Liberation Sans';color:#fff;white-space:nowrap">Windows Ink</div>
  <div style="left:132.50px;top:92.00px;width:60.70px;height:34.30px;background:linear-gradient(#b82446,#8a1430)"></div>
  <div style="left:157.5px;top:102.2px;font:bold 8px/9.6px 'Liberation Sans';color:#e8dde0;white-space:nowrap">Ƶ</div>
  <div style="left:135.0px;top:115.2px;font:2.8px/3.4px 'Liberation Sans';color:#fff;white-space:nowrap">Z-Phyllo: ...advanced online for</div>
  <div style="left:137.0px;top:119.7px;font:2.8px/3.4px 'Liberation Sans';color:#fff;white-space:nowrap">...& 100 FREE-Apps</div>
  <div style="left:6.3px;top:137.8px;font:bold 4.3px/5.2px 'Liberation Sans';color:#222;white-space:nowrap">Apps specials</div>
  <div style="left:44.5px;top:138.8px;font:3px/3.6px 'Liberation Sans';color:#2a7ad8;white-space:nowrap">See all 99</div>
  <div style="left:6.30px;top:147.70px;width:26.50px;height:9.30px;background:#f6a800"></div>
  <div style="left:34.50px;top:147.70px;width:27.50px;height:9.30px;background:#7a1a10"></div>
  <div style="left:64.00px;top:147.70px;width:27.00px;height:9.30px;background:#3a1410"></div>
  <div style="left:92.50px;top:147.70px;width:27.00px;height:9.30px;background:#f28a10"></div>
  <div style="left:120.00px;top:147.70px;width:30.00px;height:9.30px;background:#fdfdfd"></div>
  <div style="left:151.00px;top:147.70px;width:25.60px;height:9.30px;background:#1b1438"></div>
  <div style="left:178.90px;top:147.70px;width:14.50px;height:9.30px;background:#1a7fd9"></div>
  <div style="left:12.00px;top:150.00px;width:14.00px;height:7.00px;background:#d43b2a;clip-path:polygon(50% 0,100% 50%,50% 100%,0 50%)"></div>
  <div style="left:40.00px;top:149.00px;width:18.00px;height:8.00px;background:#a02818"></div>
  <div style="left:72.00px;top:150.00px;width:12.00px;height:6.00px;background:#5a3028"></div>
  <div style="left:99.00px;top:150.00px;width:14.00px;height:7.00px;background:#c86a20"></div>
  <div style="left:134.00px;top:152.00px;width:6.00px;height:2.00px;background:#5a6ab0"></div>
  <div style="left:157.00px;top:150.00px;width:12.00px;height:6.00px;background:#d0243c"></div>
</div>

<!-- ========== THUMB 2 : Command Prompt ========== -->
<svg class="a" style="left:265px;top:99px" width="22" height="18" viewBox="0 0 22 18"><rect x="0.6" y="1" width="20.4" height="16" fill="#0c0c0c" stroke="#9a9a9a" stroke-width="0.8"/><rect x="1" y="1.2" width="19.6" height="2" fill="#d8d8d8"/><path d="M5.4 5 H3.4 V8.6 H5.4 M7 5.6 V6.3 M7 7.8 V8.5 M8.6 5 L11.4 8.6 M12.6 8.6 H18.2" fill="none" stroke="#e8e8e8" stroke-width="1.1"/></svg>
<div class="t" style="left:295px;top:102.4px">Command Prompt</div>
<div class="th" style="left:269px;top:123px;width:301px;height:158px;background:#0c0c0c">
  <div style="left:0;top:0;width:301px;height:10px;background:#fff"></div>
  <div style="left:2px;top:3px;width:5px;height:4px;background:#111"></div>
  <div style="left:9px;top:2.5px;font:4px/5px 'Liberation Sans';color:#999;white-space:nowrap">Command Prompt</div>
  <div style="left:296px;top:10px;width:5px;height:148px;background:#f0f0f0"></div>
  <div style="left:297px;top:13px;width:3px;height:7px;background:#c8c8c8"></div>
  <div style="left:0;top:10.6px;font:4.1px/5px 'Liberation Mono';color:#bdbdbd;white-space:pre">Microsoft Windows [Version 10.0.18362.175]
(c) 2019 Microsoft Corporation. All rights reserved.

C:\Users\user1&gt;</div>
</div>

<!-- ========== THUMB 3 : Firewall ========== -->
<svg class="a" style="left:589px;top:96px" width="26" height="25" viewBox="0 0 26 25">
  <defs><radialGradient id="gl" cx="0.4" cy="0.35" r="0.7"><stop offset="0" stop-color="#e8ffff"/><stop offset="0.35" stop-color="#40c8f0"/><stop offset="0.75" stop-color="#2050d0"/><stop offset="1" stop-color="#1030a0"/></radialGradient>
  <linearGradient id="br" x1="0" y1="0" x2="1" y2="1"><stop offset="0" stop-color="#d27a62"/><stop offset="0.6" stop-color="#b85a40"/><stop offset="1" stop-color="#8a3420"/></linearGradient></defs>
  <circle cx="17" cy="7.4" r="6.2" fill="url(#gl)"/>
  <path d="M12 3.5 q3 -2 5 -0.5 q-1 2.5 -4 3.5z M20.5 6 q2 1 2 3 l-2 1z" fill="#3ad030"/>
  <path d="M2.2 7.8 L18.9 8.9 L18.9 22.6 L2.2 19.4 Z" fill="url(#br)"/>
  <path d="M2.2 11.2 L18.9 12.5 M2.2 14.6 L18.9 16 M2.2 18 L18.9 19.6 M7 8.1 V11.5 M13 8.5 V12 M5 11.4 V14.8 M10.5 11.8 V15.2 M16 12.3 V15.8 M7.5 14.8 V18.2 M13.5 15.3 V18.8" stroke="#8a4030" stroke-width="0.6" opacity="0.7"/>
</svg>
<div class="t" style="left:620px;top:102.4px">Windows Defender Firewall with Adva...</div>
<div class="th" style="left:593px;top:123px;width:262px;height:157px;background:#fff">
  <div style="left:1.50px;top:1.80px;width:3.20px;height:3.00px;background:#b04a30"></div>
  <div style="left:3.20px;top:1.30px;width:2.00px;height:2.00px;background:#3a8ad8;border-radius:50%"></div>
  <div style="left:7.3px;top:2.2px;font:3px/3.6px 'Liberation Sans';color:#888;white-space:nowrap">Windows Defender Firewall with Advanced Security</div>
  <div style="left:0.00px;top:6.80px;width:262.00px;height:0.50px;background:#e0e0e0"></div>
  <div style="left:2.7px;top:8.8px;font:3px/3.6px 'Liberation Sans';color:#444;white-space:nowrap">File</div>
  <div style="left:12.0px;top:8.8px;font:3px/3.6px 'Liberation Sans';color:#444;white-space:nowrap">Action</div>
  <div style="left:24.0px;top:8.8px;font:3px/3.6px 'Liberation Sans';color:#444;white-space:nowrap">View</div>
  <div style="left:34.0px;top:8.8px;font:3px/3.6px 'Liberation Sans';color:#444;white-space:nowrap">Help</div>
  <div style="left:0.00px;top:12.80px;width:262.00px;height:0.50px;background:#e6e6e6"></div>
  <div style="left:2.0px;top:14.7px;font:3.2px/3.8px 'Liberation Sans';color:#666;white-space:nowrap">←</div>
  <div style="left:7.5px;top:14.7px;font:3.2px/3.8px 'Liberation Sans';color:#666;white-space:nowrap">→</div>
  <div style="left:15.00px;top:14.30px;width:4.50px;height:3.60px;background:#b8d0ea"></div>
  <div style="left:23.50px;top:14.30px;width:2.60px;height:3.60px;background:#3a5ac8"></div>
  <div style="left:28.50px;top:14.30px;width:4.00px;height:3.60px;background:#b8d0ea"></div>
  <div style="left:0.00px;top:19.30px;width:262.00px;height:0.50px;background:#dcdcdc"></div>
  <div style="left:0.40px;top:20.20px;width:47.00px;height:6.00px;background:#d8d8d8"></div>
  <div style="left:3.00px;top:21.90px;width:3.00px;height:3.00px;background:#a04a30"></div>
  <div style="left:6.6px;top:22.3px;font:2.9px/3.5px 'Liberation Sans';color:#222;white-space:nowrap">Windows Defender Firewall with</div>
  <div style="left:7.00px;top:26.00px;width:3.00px;height:3.00px;background:#a04a30"></div>
  <div style="left:11.0px;top:26.4px;font:2.9px/3.5px 'Liberation Sans';color:#333;white-space:nowrap">Inbound Rules</div>
  <div style="left:7.00px;top:30.50px;width:3.00px;height:3.00px;background:#a04a30"></div>
  <div style="left:11.0px;top:30.9px;font:2.9px/3.5px 'Liberation Sans';color:#333;white-space:nowrap">Outbound Rules</div>
  <div style="left:7.00px;top:34.90px;width:3.00px;height:3.00px;background:#3050c0"></div>
  <div style="left:11.0px;top:35.3px;font:2.9px/3.5px 'Liberation Sans';color:#333;white-space:nowrap">Connection Security Rules</div>
  <div style="left:7.00px;top:39.70px;width:3.00px;height:3.00px;background:#3050c0"></div>
  <div style="left:11.0px;top:40.1px;font:2.9px/3.5px 'Liberation Sans';color:#333;white-space:nowrap">Monitoring</div>
  <div style="left:3.5px;top:40.0px;font:3px/3.6px 'Liberation Sans';color:#999;white-space:nowrap">›</div>
  <div style="left:48.00px;top:20.00px;width:1.00px;height:131.00px;background:#c8c8c8"></div>
  <div style="left:0.40px;top:147.00px;width:47.00px;height:3.60px;background:#f0f0f0"></div>
  <div style="left:3.00px;top:147.40px;width:19.00px;height:2.80px;background:#c4c4c4"></div>
  <div style="left:49.30px;top:21.00px;width:147.60px;height:5.20px;background:#6f6f6f"></div>
  <div style="left:51.0px;top:22.5px;font:bold 2.9px/3.5px 'Liberation Sans';color:#f0f0f0;white-space:nowrap">Windows Defender Firewall with Advanced Security on Local Computer</div>
  <div style="left:51.00px;top:28.00px;width:141.00px;height:12.50px;background:#efefef"></div>
  <div style="left:53.50px;top:31.00px;width:6.50px;height:6.50px;background:#a04a30;border-radius:1px"></div>
  <div style="left:57.50px;top:30.00px;width:3.00px;height:3.00px;background:#3a9ad8;border-radius:50%"></div>
  <div style="left:62.3px;top:33.3px;font:2.85px/3.4px 'Liberation Sans';color:#333;white-space:nowrap">Windows Defender Firewall with Advanced Security provides network security for Windows computers.</div>
  <div style="left:53.00px;top:43.30px;width:139.00px;height:0.50px;background:#d0d0d0"></div>
  <div style="left:53.00px;top:43.80px;width:139.00px;height:5.00px;background:#f4f4f4"></div>
  <div style="left:55.0px;top:45.3px;font:2.8px/3.4px 'Liberation Sans';color:#666;white-space:nowrap">Overview</div>
  <div style="left:55.4px;top:51.2px;font:bold 3.2px/3.8px 'Liberation Sans';color:#222;white-space:nowrap">Domain Profile</div>
  <div style="left:55.4px;top:74.8px;font:bold 3.2px/3.8px 'Liberation Sans';color:#222;white-space:nowrap">Private Profile is Active</div>
  <div style="left:55.4px;top:98.4px;font:bold 3.2px/3.8px 'Liberation Sans';color:#222;white-space:nowrap">Public Profile</div>
  <div style="left:57.00px;top:56.60px;width:2.60px;height:3.20px;background:#4aa84a;border-radius:0 0 50% 50%"></div>
  <div style="left:61.6px;top:57.1px;font:2.85px/3.4px 'Liberation Sans';color:#444;white-space:nowrap">Windows Defender Firewall is on.</div>
  <div style="left:56.80px;top:62.20px;width:3.00px;height:3.00px;background:#e04848;border-radius:50%"></div>
  <div style="left:61.6px;top:62.6px;font:2.85px/3.4px 'Liberation Sans';color:#444;white-space:nowrap">Inbound connections that do not match a rule are blocked.</div>
  <div style="left:56.80px;top:67.70px;width:3.00px;height:3.00px;background:#3a9a3a;border-radius:50%"></div>
  <div style="left:61.6px;top:68.1px;font:2.85px/3.4px 'Liberation Sans';color:#444;white-space:nowrap">Outbound connections that do not match a rule are allowed.</div>
  <div style="left:57.00px;top:80.20px;width:2.60px;height:3.20px;background:#4aa84a;border-radius:0 0 50% 50%"></div>
  <div style="left:61.6px;top:80.7px;font:2.85px/3.4px 'Liberation Sans';color:#444;white-space:nowrap">Windows Defender Firewall is on.</div>
  <div style="left:56.80px;top:85.80px;width:3.00px;height:3.00px;background:#e04848;border-radius:50%"></div>
  <div style="left:61.6px;top:86.2px;font:2.85px/3.4px 'Liberation Sans';color:#444;white-space:nowrap">Inbound connections that do not match a rule are blocked.</div>
  <div style="left:56.80px;top:91.30px;width:3.00px;height:3.00px;background:#3a9a3a;border-radius:50%"></div>
  <div style="left:61.6px;top:91.7px;font:2.85px/3.4px 'Liberation Sans';color:#444;white-space:nowrap">Outbound connections that do not match a rule are allowed.</div>
  <div style="left:57.00px;top:103.80px;width:2.60px;height:3.20px;background:#4aa84a;border-radius:0 0 50% 50%"></div>
  <div style="left:61.6px;top:104.3px;font:2.85px/3.4px 'Liberation Sans';color:#444;white-space:nowrap">Windows Defender Firewall is on.</div>
  <div style="left:56.80px;top:109.40px;width:3.00px;height:3.00px;background:#e04848;border-radius:50%"></div>
  <div style="left:61.6px;top:109.8px;font:2.85px/3.4px 'Liberation Sans';color:#444;white-space:nowrap">Inbound connections that do not match a rule are blocked.</div>
  <div style="left:56.80px;top:114.90px;width:3.00px;height:3.00px;background:#3a9a3a;border-radius:50%"></div>
  <div style="left:61.6px;top:115.3px;font:2.85px/3.4px 'Liberation Sans';color:#444;white-space:nowrap">Outbound connections that do not match a rule are allowed.</div>
  <div style="left:56.80px;top:122.00px;width:3.00px;height:3.00px;background:#5ac84a"></div>
  <div style="left:61.6px;top:122.4px;font:2.85px/3.4px 'Liberation Sans';color:#2a6ad0;white-space:nowrap">Windows Defender Firewall Properties</div>
  <div style="left:53.00px;top:127.00px;width:139.00px;height:0.50px;background:#c8c8c8"></div>
  <div style="left:53.00px;top:129.00px;width:139.00px;height:5.00px;background:#f4f4f4"></div>
  <div style="left:55.0px;top:130.5px;font:2.8px/3.4px 'Liberation Sans';color:#555;white-space:nowrap">Getting Started</div>
  <div style="left:55.4px;top:136.0px;font:bold 3.2px/3.8px 'Liberation Sans';color:#222;white-space:nowrap">Authenticate communications between computers</div>
  <div style="left:55.4px;top:141.5px;font:2.7px/3.2px 'Liberation Sans';color:#555;white-space:nowrap">Create connection security rules to specify how and when connections between computers are authenticated and</div>
  <div style="left:55.4px;top:145.0px;font:2.7px/3.2px 'Liberation Sans';color:#777;white-space:nowrap">protected by using Internet Protocol security (IPsec).</div>
  <div style="left:193.00px;top:28.00px;width:4.00px;height:119.00px;background:#f0f0f0"></div>
  <div style="left:193.40px;top:31.40px;width:3.20px;height:66.40px;background:#cdcdcd"></div>
  <div style="left:49.30px;top:147.00px;width:144.00px;height:3.60px;background:#f0f0f0"></div>
  <div style="left:54.30px;top:147.40px;width:125.00px;height:2.80px;background:#cacaca"></div>
  <div style="left:197.80px;top:20.00px;width:1.00px;height:131.00px;background:#c8c8c8"></div>
  <div style="left:198.70px;top:21.00px;width:62.00px;height:5.50px;background:#f0f0f0"></div>
  <div style="left:200.5px;top:22.3px;font:bold 2.9px/3.5px 'Liberation Sans';color:#444;white-space:nowrap">Actions</div>
  <div style="left:198.70px;top:26.80px;width:62.00px;height:5.20px;background:#c4d8ee"></div>
  <div style="left:200.3px;top:28.4px;font:2.8px/3.4px 'Liberation Sans';color:#223;white-space:nowrap">Windows Defender Firewall with Advan...</div>
  <div style="left:258.0px;top:28.4px;font:2.8px/3.4px 'Liberation Sans';color:#333;white-space:nowrap">▲</div>
  <div style="left:201.20px;top:34.50px;width:3.00px;height:3.00px;background:#5ac84a"></div>
  <div style="left:206.0px;top:34.9px;font:2.9px/3.5px 'Liberation Sans';color:#444;white-space:nowrap">Import Policy...</div>
  <div style="left:201.20px;top:40.20px;width:3.00px;height:3.00px;background:#5ac84a"></div>
  <div style="left:206.0px;top:40.6px;font:2.9px/3.5px 'Liberation Sans';color:#444;white-space:nowrap">Export Policy...</div>
  <div style="left:206.0px;top:46.3px;font:2.9px/3.5px 'Liberation Sans';color:#444;white-space:nowrap">Restore Default Policy</div>
  <div style="left:206.0px;top:52.5px;font:2.9px/3.5px 'Liberation Sans';color:#444;white-space:nowrap">Diagnose / Repair</div>
  <div style="left:206.0px;top:58.5px;font:2.9px/3.5px 'Liberation Sans';color:#444;white-space:nowrap">View</div>
  <div style="left:201.20px;top:64.30px;width:3.00px;height:3.00px;background:#5ac84a"></div>
  <div style="left:206.0px;top:64.7px;font:2.9px/3.5px 'Liberation Sans';color:#444;white-space:nowrap">Refresh</div>
  <div style="left:201.40px;top:70.60px;width:2.60px;height:3.20px;background:#ddd;border:0.4px solid #999"></div>
  <div style="left:206.0px;top:71.1px;font:2.9px/3.5px 'Liberation Sans';color:#444;white-space:nowrap">Properties</div>
  <div style="left:201.20px;top:76.90px;width:3.00px;height:3.00px;background:#3050c0"></div>
  <div style="left:206.0px;top:77.3px;font:2.9px/3.5px 'Liberation Sans';color:#444;white-space:nowrap">Help</div>
  <div style="left:257.5px;top:58.6px;font:2.8px/3.4px 'Liberation Sans';color:#444;white-space:nowrap">►</div>
  <div style="left:0.00px;top:151.50px;width:262.00px;height:6.00px;background:#f0f0f0"></div>
</div>

<!-- ========== THUMB 4 : File Explorer ========== -->
<svg class="a" style="left:43px;top:301px" width="22" height="19" viewBox="0 0 22 19">
  <path d="M1 2 H8 L10 3.5 H21 V18 H1 Z" fill="#f8d56a"/><rect x="1" y="2" width="8" height="2" fill="#e4a213"/>
  <rect x="1" y="5" width="20" height="13" fill="#fcd24a"/>
  <path d="M5 10 H17 V18 H14 V13 H8 V18 H5 Z" fill="#3b8fe0"/><rect x="9" y="13.5" width="4" height="2.5" fill="#f4c030"/>
</svg>
<div class="t" style="left:73px;top:305px">File Explorer</div>
<div class="th" style="left:45px;top:326px;width:245.5px;height:158px;background:#fff">
  <div style="left:2.0px;top:3.0px;width:4px;height:3px;background:#e8b830"></div>
  <div style="left:5.0px;top:4.5px;width:2px;height:1.5px;background:#4a90e0"></div>
  <div style="left:9.0px;top:3.0px;width:3px;height:3px;background:#d8e4f0"></div>
  <div style="left:14.0px;top:3.0px;width:3px;height:3px;background:#d8e4f0"></div>
  <div style="left:20.0px;top:3.3px;font:3px/3.6px 'Liberation Sans';color:#777;white-space:nowrap">▼</div>
  <div style="left:25.0px;top:2.0px;width:0.6px;height:5px;background:#ccc"></div>
  <div style="left:28.0px;top:2.9px;font:3.4px/4.1px 'Liberation Sans';color:#333;white-space:nowrap">File Explorer</div>
  <div style="left:0.0px;top:9.0px;width:14.6px;height:4.8px;background:#1d62b8"></div>
  <div style="left:4.0px;top:10.1px;font:3.2px/3.8px 'Liberation Sans';color:#fff;white-space:nowrap">File</div>
  <div style="left:18.0px;top:10.0px;font:3.2px/3.8px 'Liberation Sans';color:#555;white-space:nowrap">Home</div>
  <div style="left:33.7px;top:10.0px;font:3.2px/3.8px 'Liberation Sans';color:#555;white-space:nowrap">Share</div>
  <div style="left:48.0px;top:10.0px;font:3.2px/3.8px 'Liberation Sans';color:#555;white-space:nowrap">View</div>
  <div style="left:237.0px;top:9.3px;font:3px/3.6px 'Liberation Sans';color:#888;white-space:nowrap">v</div>
  <div style="left:238.5px;top:8.8px;width:4.4px;height:4.4px;background:#1e78d8;border-radius:50%"></div>
  <div style="left:0.0px;top:14.8px;width:245px;height:0.6px;background:#eee"></div>
  <div style="left:3.0px;top:17.7px;font:3.2px/3.8px 'Liberation Sans';color:#aaa;white-space:nowrap">←</div>
  <div style="left:11.0px;top:17.7px;font:3.2px/3.8px 'Liberation Sans';color:#ccc;white-space:nowrap">→</div>
  <div style="left:17.0px;top:17.8px;font:3px/3.6px 'Liberation Sans';color:#bbb;white-space:nowrap">v</div>
  <div style="left:22.5px;top:17.6px;font:3.4px/4.1px 'Liberation Sans';color:#666;white-space:nowrap">↑</div>
  <div style="left:27.0px;top:17.0px;width:188px;height:5px;background:#fff;border:0.6px solid #e2e2e2"></div>
  <div style="left:29.0px;top:18.0px;width:3px;height:2.4px;background:#3a8ad8"></div>
  <div style="left:33.5px;top:17.8px;font:3px/3.6px 'Liberation Sans';color:#777;white-space:nowrap">›</div>
  <div style="left:37.6px;top:17.6px;font:3.2px/3.8px 'Liberation Sans';color:#444;white-space:nowrap">Quick access</div>
  <div style="left:181.0px;top:17.8px;font:3px/3.6px 'Liberation Sans';color:#777;white-space:nowrap">v</div>
  <div style="left:185.0px;top:17.7px;font:3.2px/3.8px 'Liberation Sans';color:#777;white-space:nowrap">o</div>
  <div style="left:190.0px;top:17.0px;width:53px;height:5px;background:#fff;border:0.6px solid #e2e2e2"></div>
  <div style="left:192.2px;top:17.9px;font:3px/3.6px 'Liberation Sans';color:#888;white-space:nowrap">Search Quick access</div>
  <div style="left:239.0px;top:17.9px;font:3px/3.6px 'Liberation Sans';color:#666;white-space:nowrap">o</div>
  <div style="left:1.0px;top:27.7px;width:39px;height:6px;background:#d9d9d9"></div>
  <div style="left:5.0px;top:29.2px;width:3px;height:3px;background:#2a8ad8"></div>
  <div style="left:12.0px;top:29.6px;font:3.1px/3.7px 'Liberation Sans';color:#333;white-space:nowrap">Quick access</div>
  <div style="left:6.0px;top:35.3px;width:3px;height:3px;background:#2a8ad8"></div>
  <div style="left:12.0px;top:35.7px;font:3.1px/3.7px 'Liberation Sans';color:#555;white-space:nowrap">Desktop</div>
  <div style="left:37.5px;top:35.7px;font:3px/3.6px 'Liberation Sans';color:#888;white-space:nowrap">⸗</div>
  <div style="left:6.0px;top:41.4px;width:3px;height:3px;background:#2a6ad8"></div>
  <div style="left:12.0px;top:41.8px;font:3.1px/3.7px 'Liberation Sans';color:#555;white-space:nowrap">Downloads</div>
  <div style="left:37.5px;top:41.8px;font:3px/3.6px 'Liberation Sans';color:#888;white-space:nowrap">⸗</div>
  <div style="left:6.0px;top:47.6px;width:3px;height:3px;background:#b8c8d8"></div>
  <div style="left:12.0px;top:48.0px;font:3.1px/3.7px 'Liberation Sans';color:#555;white-space:nowrap">Documents</div>
  <div style="left:37.5px;top:48.0px;font:3px/3.6px 'Liberation Sans';color:#888;white-space:nowrap">⸗</div>
  <div style="left:6.0px;top:53.7px;width:3px;height:3px;background:#5a8ab8"></div>
  <div style="left:12.0px;top:54.1px;font:3.1px/3.7px 'Liberation Sans';color:#555;white-space:nowrap">Pictures</div>
  <div style="left:37.5px;top:54.1px;font:3px/3.6px 'Liberation Sans';color:#888;white-space:nowrap">⸗</div>
  <div style="left:6.0px;top:59.8px;width:3px;height:3px;background:#3a8ad8"></div>
  <div style="left:12.0px;top:60.2px;font:3.1px/3.7px 'Liberation Sans';color:#555;white-space:nowrap">Music</div>
  <div style="left:6.0px;top:65.8px;width:3px;height:3px;background:#444"></div>
  <div style="left:12.0px;top:66.2px;font:3.1px/3.7px 'Liberation Sans';color:#555;white-space:nowrap">Videos</div>
  <div style="left:6.0px;top:73.7px;width:3px;height:3px;background:#2a8ad8"></div>
  <div style="left:11.0px;top:74.1px;font:3.1px/3.7px 'Liberation Sans';color:#555;white-space:nowrap">OneDrive</div>
  <div style="left:6.0px;top:82.7px;width:3px;height:3px;background:#3aa0d8"></div>
  <div style="left:11.0px;top:83.1px;font:3.1px/3.7px 'Liberation Sans';color:#555;white-space:nowrap">This PC</div>
  <div style="left:6.0px;top:91.2px;width:3px;height:3px;background:#3a90d8"></div>
  <div style="left:11.0px;top:91.6px;font:3.1px/3.7px 'Liberation Sans';color:#555;white-space:nowrap">Network</div>
  <div style="left:44.0px;top:27.0px;font:3px/3.6px 'Liberation Sans';color:#6a8ac8;white-space:nowrap">v</div>
  <div style="left:47.0px;top:26.9px;font:3.3px/4.0px 'Liberation Sans';color:#2d5fb8;white-space:nowrap">Frequent folders (6)</div>
  <div style="left:52.0px;top:35.4px;width:10.5px;height:10.6px;background:#f4c94a"></div>
  <div style="left:52.0px;top:35.4px;width:4px;height:1.4px;background:#e0a820"></div>
  <div style="left:55.0px;top:38.9px;width:7.5px;height:7px;background:#2f9aee"></div>
  <div style="left:63.7px;top:35.4px;font:3.2px/3.8px 'Liberation Sans';color:#333;white-space:nowrap">Desktop</div>
  <div style="left:63.7px;top:39.4px;font:2.8px/3.4px 'Liberation Sans';color:#999;white-space:nowrap">This PC</div>
  <div style="left:63.7px;top:43.4px;font:2.8px/3.4px 'Liberation Sans';color:#888;white-space:nowrap">⸗</div>
  <div style="left:110.9px;top:35.4px;width:10.5px;height:10.6px;background:#f4c94a"></div>
  <div style="left:110.9px;top:35.4px;width:4px;height:1.4px;background:#e0a820"></div>
  <div style="left:113.9px;top:38.9px;width:7.5px;height:7px;background:#2f80e0"></div>
  <div style="left:122.6px;top:35.4px;font:3.2px/3.8px 'Liberation Sans';color:#333;white-space:nowrap">Downloads</div>
  <div style="left:122.6px;top:39.4px;font:2.8px/3.4px 'Liberation Sans';color:#999;white-space:nowrap">This PC</div>
  <div style="left:122.6px;top:43.4px;font:2.8px/3.4px 'Liberation Sans';color:#888;white-space:nowrap">⸗</div>
  <div style="left:170.6px;top:35.4px;width:10.5px;height:10.6px;background:#f4c94a"></div>
  <div style="left:170.6px;top:35.4px;width:4px;height:1.4px;background:#e0a820"></div>
  <div style="left:173.6px;top:38.9px;width:7.5px;height:7px;background:#d8e0ea"></div>
  <div style="left:182.3px;top:35.4px;font:3.2px/3.8px 'Liberation Sans';color:#333;white-space:nowrap">Documents</div>
  <div style="left:182.3px;top:39.4px;font:2.8px/3.4px 'Liberation Sans';color:#999;white-space:nowrap">This PC</div>
  <div style="left:182.3px;top:43.4px;font:2.8px/3.4px 'Liberation Sans';color:#888;white-space:nowrap">⸗</div>
  <div style="left:52.0px;top:52.0px;width:10.5px;height:10.6px;background:#f4c94a"></div>
  <div style="left:52.0px;top:52.0px;width:4px;height:1.4px;background:#e0a820"></div>
  <div style="left:55.0px;top:55.5px;width:7.5px;height:7px;background:#5a8ab0"></div>
  <div style="left:63.7px;top:52.0px;font:3.2px/3.8px 'Liberation Sans';color:#333;white-space:nowrap">Pictures</div>
  <div style="left:63.7px;top:56.0px;font:2.8px/3.4px 'Liberation Sans';color:#999;white-space:nowrap">This PC</div>
  <div style="left:110.9px;top:52.0px;width:10.5px;height:10.6px;background:#f4c94a"></div>
  <div style="left:110.9px;top:52.0px;width:4px;height:1.4px;background:#e0a820"></div>
  <div style="left:113.9px;top:55.5px;width:7.5px;height:7px;background:#2f80e0"></div>
  <div style="left:122.6px;top:52.0px;font:3.2px/3.8px 'Liberation Sans';color:#333;white-space:nowrap">Music</div>
  <div style="left:122.6px;top:56.0px;font:2.8px/3.4px 'Liberation Sans';color:#999;white-space:nowrap">This PC</div>
  <div style="left:170.6px;top:52.0px;width:10.5px;height:10.6px;background:#f4c94a"></div>
  <div style="left:170.6px;top:52.0px;width:4px;height:1.4px;background:#e0a820"></div>
  <div style="left:173.6px;top:55.5px;width:7.5px;height:7px;background:#2a3a5a"></div>
  <div style="left:182.3px;top:52.0px;font:3.2px/3.8px 'Liberation Sans';color:#333;white-space:nowrap">Videos</div>
  <div style="left:182.3px;top:56.0px;font:2.8px/3.4px 'Liberation Sans';color:#999;white-space:nowrap">This PC</div>
  <div style="left:44.0px;top:71.2px;font:3px/3.6px 'Liberation Sans';color:#6a8ac8;white-space:nowrap">v</div>
  <div style="left:47.0px;top:71.1px;font:3.3px/4.0px 'Liberation Sans';color:#2d5fb8;white-space:nowrap">Recent files (0)</div>
  <div style="left:95.8px;top:81.8px;font:2.9px/3.5px 'Liberation Sans';color:#777;white-space:nowrap">After you’ve opened some files, we’ll show the most recent ones here.</div>
  <div style="left:4.0px;top:154.0px;font:2.8px/3.4px 'Liberation Sans';color:#666;white-space:nowrap">6 items</div>
  <div style="left:236.0px;top:153.5px;width:3px;height:3px;background:#ccc"></div>
  <div style="left:240.5px;top:153.5px;width:3px;height:3px;background:#5a8ad8"></div>
</div>

<!-- ========== THUMB 5 : Chess / Firefox ========== -->
<svg class="a" style="left:0;top:0;width:0;height:0">
  <defs>
    <radialGradient id="ffb" cx="0.75" cy="0.2" r="1"><stop offset="0" stop-color="#ffd84a"/><stop offset="0.35" stop-color="#ff9a20"/><stop offset="0.7" stop-color="#ff4a2a"/><stop offset="1" stop-color="#e81e5a"/></radialGradient>
    <linearGradient id="fft" x1="0" y1="0" x2="0.3" y2="1"><stop offset="0" stop-color="#fff03a"/><stop offset="0.6" stop-color="#ffc21a"/><stop offset="1" stop-color="#ff8a1a"/></linearGradient>
    <linearGradient id="ffg" x1="0" y1="0" x2="0" y2="1"><stop offset="0" stop-color="#1e90ff"/><stop offset="0.6" stop-color="#2a5ae0"/><stop offset="1" stop-color="#3a1a90"/></linearGradient>
    <symbol id="ffx" viewBox="0 0 24 24">
      <path d="M13 1.3 C19.5 2.5 23 7.5 22.8 12.8 C22.5 18.5 17.8 22.8 12 22.8 C6 22.8 1.3 18 1.3 12 C1.3 9.6 2 7.6 3.2 5.8 L4.6 7.4 C5.5 6.2 7.2 5.8 8.6 6.4 C9.6 4.2 11.2 2.4 13 1.3 Z" fill="url(#ffb)"/>
      <circle cx="12.6" cy="10.6" r="6.2" fill="url(#ffg)"/>
      <path d="M3.2 5.8 L4.6 7.4 C5.8 6 8 5.6 9.4 6.8 C10.2 7.6 10.4 8.4 9.6 9.4 C9 10 8.6 10.6 9.2 11.4 C10 12.4 12 12.6 13.6 12.2 C12.8 14.4 10.6 15.4 8.4 15 C5.8 14.4 4 12 4.2 9 Z" fill="#ff7a22"/>
      <path d="M13 1.3 C19.5 2.5 23 7.5 22.8 12.8 C22.6 17 20 20.5 16.4 21.8 C18.6 19.6 19.6 16.6 19.2 13.4 C18.8 9 16.4 4.8 13 1.3 Z" fill="url(#fft)"/>
    </symbol>
  </defs>
</svg>
<svg class="a" style="left:310.3px;top:298.7px" width="24" height="24"><use href="#ffx" width="24" height="24"/></svg>
<div class="t" style="left:341px;top:305px">Mate in Three Moves, White to Play | Chess P...</div>
<div class="th" style="left:314px;top:326px;width:293px;height:158px;background:#fff">
  <div style="left:0.00px;top:2.10px;width:293.00px;height:6.70px;background:#202146"></div>
  <div style="left:0.00px;top:2.10px;width:47.80px;height:6.70px;background:#f9f9fa"></div>
  <div style="left:0.00px;top:2.10px;width:47.80px;height:0.60px;background:#0a84ff"></div>
  <div style="left:2.00px;top:5.00px;width:2.00px;height:2.00px;background:#333;border-radius:50%"></div>
  <div style="left:6.2px;top:4.7px;font:3px/3.6px 'Liberation Sans';color:#222;white-space:nowrap">Mate in Three Moves, White t...</div>
  <div style="left:42.8px;top:4.9px;font:2.8px/3.4px 'Liberation Sans';color:#555;white-space:nowrap">×</div>
  <div style="left:50.5px;top:3.8px;font:4px/4.8px 'Liberation Sans';color:#ccd;white-space:nowrap">+</div>
  <div style="left:263.40px;top:2.10px;width:10.10px;height:6.70px;background:#6b6d80"></div>
  <div style="left:266.50px;top:5.30px;width:4.00px;height:0.50px;background:#fff"></div>
  <div style="left:276.50px;top:3.80px;width:3.00px;height:3.00px;background:transparent;border:0.5px solid #ddd"></div>
  <div style="left:286.8px;top:4.4px;font:3px/3.6px 'Liberation Sans';color:#ddd;white-space:nowrap">×</div>
  <div style="left:0.00px;top:8.80px;width:293.00px;height:8.80px;background:#f9f9fa"></div>
  <div style="left:1.8px;top:11.8px;font:3.4px/4.1px 'Liberation Sans';color:#333;white-space:nowrap">←</div>
  <div style="left:10.0px;top:11.8px;font:3.4px/4.1px 'Liberation Sans';color:#bbb;white-space:nowrap">→</div>
  <div style="left:16.7px;top:11.8px;font:3.4px/4.1px 'Liberation Sans';color:#333;white-space:nowrap">o</div>
  <div style="left:23.5px;top:11.7px;font:3.6px/4.3px 'Liberation Sans';color:#333;white-space:nowrap">⌂</div>
  <div style="left:53.70px;top:9.80px;width:185.50px;height:6.60px;background:#fff;border:0.5px solid #ddd"></div>
  <div style="left:55.8px;top:12.0px;font:3px/3.6px 'Liberation Sans';color:#777;white-space:nowrap">i</div>
  <div style="left:60.0px;top:12.3px;font:2.6px/3.1px 'Liberation Sans';color:#777;white-space:nowrap">■</div>
  <div style="left:64.60px;top:12.00px;width:2.60px;height:2.60px;background:#12bc00;border-radius:50%"></div>
  <div style="left:69.5px;top:12.0px;font:3px/3.6px 'Liberation Sans';color:#888;white-space:nowrap"><span style="display:inline-block;width:9.6px;height:1.2px;background:#aaa;vertical-align:middle;margin-right:0.6px"></span><span style="color:#222">chesspuzzles.com</span>/mate-in-three-moves-white-to-play/</div>
  <div style="left:221.5px;top:12.0px;font:bold 3px/3.6px 'Liberation Sans';color:#555;white-space:nowrap">···</div>
  <div style="left:227.7px;top:11.9px;font:3.2px/3.8px 'Liberation Sans';color:#444;white-space:nowrap">◐</div>
  <div style="left:234.0px;top:11.8px;font:3.4px/4.1px 'Liberation Sans';color:#444;white-space:nowrap">*</div>
  <div style="left:242.00px;top:10.50px;width:22.00px;height:5.50px;background:#f3f3f3"></div>
  <div style="left:265.8px;top:11.8px;font:3.4px/4.1px 'Liberation Sans';color:#444;white-space:nowrap">|||</div>
  <div style="left:272.7px;top:11.8px;font:3.4px/4.1px 'Liberation Sans';color:#444;white-space:nowrap">○</div>
  <div style="left:280.0px;top:12.0px;font:3px/3.6px 'Liberation Sans';color:#555;white-space:nowrap">■</div>
  <div style="left:288.0px;top:11.9px;font:3.2px/3.8px 'Liberation Sans';color:#444;white-space:nowrap">≡</div>
  <div style="left:0.00px;top:17.60px;width:293.00px;height:0.50px;background:#d8d8d8"></div>
  <div style="left:10.3px;top:19.8px;font:4.6px/5.5px 'Liberation Sans';color:#444;white-space:nowrap">Chess Puzzles and Tactics</div>
  <div style="left:0.00px;top:25.20px;width:289.00px;height:1.20px;background:#5aa4ae"></div>
  <div style="left:10.3px;top:28.3px;font:5.7px/6.8px 'Liberation Sans';color:#222;white-space:nowrap">Mate in Three Moves, White to Play</div>
  <div style="left:206.0px;top:29.0px;font:2.8px/3.4px 'Liberation Sans';color:#5ac0e0;white-space:nowrap">i ►</div>

  <!-- board -->
  <div style="left:19px;top:38px;width:107px;height:107.5px;background:#111"></div>
  <svg style="left:22.5px;top:41.7px" width="100.5" height="100.8" viewBox="0 0 8 8" preserveAspectRatio="none">
    <rect width="8" height="8" fill="#e3e8ec"/>
    <g fill="#98adbd">
      <rect x="1" y="0" width="1" height="1"/><rect x="3" y="0" width="1" height="1"/><rect x="5" y="0" width="1" height="1"/><rect x="7" y="0" width="1" height="1"/>
      <rect x="0" y="1" width="1" height="1"/><rect x="2" y="1" width="1" height="1"/><rect x="4" y="1" width="1" height="1"/><rect x="6" y="1" width="1" height="1"/>
      <rect x="1" y="2" width="1" height="1"/><rect x="3" y="2" width="1" height="1"/><rect x="5" y="2" width="1" height="1"/><rect x="7" y="2" width="1" height="1"/>
      <rect x="0" y="3" width="1" height="1"/><rect x="2" y="3" width="1" height="1"/><rect x="4" y="3" width="1" height="1"/><rect x="6" y="3" width="1" height="1"/>
      <rect x="1" y="4" width="1" height="1"/><rect x="3" y="4" width="1" height="1"/><rect x="5" y="4" width="1" height="1"/><rect x="7" y="4" width="1" height="1"/>
      <rect x="0" y="5" width="1" height="1"/><rect x="2" y="5" width="1" height="1"/><rect x="4" y="5" width="1" height="1"/><rect x="6" y="5" width="1" height="1"/>
      <rect x="1" y="6" width="1" height="1"/><rect x="3" y="6" width="1" height="1"/><rect x="5" y="6" width="1" height="1"/><rect x="7" y="6" width="1" height="1"/>
      <rect x="0" y="7" width="1" height="1"/><rect x="2" y="7" width="1" height="1"/><rect x="4" y="7" width="1" height="1"/><rect x="6" y="7" width="1" height="1"/>
    </g>
  </svg>
  <svg style="left:22.5px;top:41.7px" width="100.5" height="100.8" viewBox="0 0 80 80" preserveAspectRatio="none">
    <defs>
      <path id="pw" d="M5 1.4 a1.8 1.8 0 1 0 0.01 0 Z M3.9 4.6 h2.2 l0.5 1.6 l1.2 2.4 h-5.6 l1.2 -2.4 z"/>
      <path id="rk" d="M1.8 1.2 h1.3 v1 h1.2 v-1 h1.4 v1 h1.2 v-1 h1.3 v2.4 l-0.9 0.8 v2.6 l1.1 0.8 v1.6 h-6.4 v-1.6 l1.1 -0.8 v-2.6 l-0.9 -0.8 z"/>
      <path id="bs" d="M5 0.8 q2.3 1.8 1.6 4 l0.6 1.2 h-4.4 l0.6 -1.2 q-0.7 -2.2 1.6 -4 z M1.6 7 h6.8 v1.6 h-6.8z"/>
      <path id="kn" d="M2.6 8.6 q-0.2 -2.6 1.6 -3.6 l-1.6 0.6 l-1 -1.2 l2.8 -3.2 l1 -0.4 l0.4 0.6 q3.2 0.6 3.2 4.6 v2.6 z"/>
      <path id="qn" d="M1 2.2 l1.8 3.4 l0.3 -3.8 l1.2 3.4 l0.7 -3.8 l0.7 3.8 l1.2 -3.4 l0.3 3.8 l1.8 -3.4 l-1 6.4 h-6 z"/>
      <path id="kg" d="M4.5 0.4 h1 v1 h1 v0.9 h-1 v1 q3.6 -1 3.2 2 l-1.4 3.3 h-5.6 l-1.4 -3.3 q-0.4 -3 3.2 -2 v-1 h-1 v-0.9 h1 z"/>
    </defs>
    <g fill="#111">
      <use href="#rk" x="0" y="0"/><use href="#bs" x="20" y="0"/><use href="#qn" x="30" y="0"/><use href="#rk" x="50" y="0"/><use href="#kg" x="60" y="0"/>
      <use href="#pw" x="0" y="10"/><use href="#pw" x="10" y="10"/><use href="#kn" x="40" y="10"/><use href="#pw" x="50" y="10"/><use href="#pw" x="70" y="10"/>
      <use href="#kn" x="20" y="20"/><use href="#pw" x="60" y="20"/>
      <use href="#pw" x="30" y="30"/><use href="#pw" x="40" y="30"/>
    </g>
    <g fill="#fafafa" stroke="#222" stroke-width="0.5">
      <use href="#bs" x="50" y="20"/>
      <use href="#rk" x="30" y="40"/><use href="#qn" x="70" y="40"/>
      <use href="#pw" x="20" y="50"/>
      <use href="#pw" x="0" y="60"/><use href="#pw" x="20" y="60"/><use href="#pw" x="50" y="60"/><use href="#pw" x="60" y="60"/><use href="#pw" x="70" y="60"/>
      <use href="#kg" x="20" y="70"/><use href="#bs" x="50" y="70"/><use href="#kn" x="60" y="70"/><use href="#rk" x="70" y="70"/>
    </g>
  </svg>
  <div style="left:19px;top:148.5px;width:29px;height:6px;background:#3da892"></div>
  <div style="left:21px;top:149.3px;font:3.6px/4px 'Liberation Sans';color:#e6f7f2;white-space:nowrap">Solution</div>
  <div style="left:84.5px;top:148.5px;width:41.5px;height:6px;background:#3da892"></div>
  <div style="left:87px;top:149.3px;font:3.6px/4px 'Liberation Sans';color:#e6f7f2;white-space:nowrap">Show Results</div>
  <!-- ad -->
  <div style="left:149.5px;top:36.5px;width:61px;height:18px;border-radius:4px;background:linear-gradient(#3fdc3f,#10b010 45%,#008a00 80%,#003a00);box-shadow:0 0 0 0.6px #222"></div>
  <div style="left:149.5px;top:42.5px;width:61px;text-align:center;font:bold 5px/5px 'Liberation Sans';color:#fff;white-space:nowrap">START</div>
  <div style="left:149px;top:58px;width:62px;height:28px;background:#fcfcfc;border:1px solid #f0f0f0"></div>
  <div style="left:150px;top:63.6px;font:bold 3.8px/5px 'Liberation Sans';color:#222;white-space:nowrap">Start Download</div>
  <div style="left:151px;top:71px;width:8px;height:1.5px;background:#e08080"></div>
  <div style="left:162px;top:69px;width:22px;height:1.5px;background:#999"></div>
  <div style="left:162px;top:72.5px;width:20px;height:1.5px;background:#999"></div>
  <div style="left:162px;top:76px;width:14px;height:1.5px;background:#aaa"></div>
  <div style="left:201.5px;top:69.5px;width:7.5px;height:7.5px;border-radius:50%;background:#c81e1e"></div>
  <div style="left:148px;top:87.8px;font:4.1px/5px 'Liberation Sans';color:#555;white-space:nowrap">Chess Tactics</div>
  <div style="left:148px;top:95.3px;font:4.1px/5px 'Liberation Sans';color:#555;white-space:nowrap">Chess Puzzles</div>
  <div style="left:148px;top:103.0px;font:4.1px/5px 'Liberation Sans';color:#1e1e1e;white-space:nowrap">Chess Puzzles for Beginners</div>
  <div style="left:148px;top:107.9px;font:4.1px/5px 'Liberation Sans';color:#1e1e1e;white-space:nowrap">Endgame Puzzles</div>
  <div style="left:148px;top:113.3px;font:4.1px/5px 'Liberation Sans';color:#1e1e1e;white-space:nowrap">Find The Best Move</div>
  <div style="left:148px;top:118.5px;font:4.1px/5px 'Liberation Sans';color:#1e1e1e;white-space:nowrap">Hard Chess Puzzles</div>
  <div style="left:148px;top:124.1px;font:4.1px/5px 'Liberation Sans';color:#1e1e1e;white-space:nowrap">Mate in 2 chess puzzles</div>
  <div style="left:148px;top:129.2px;font:4.1px/5px 'Liberation Sans';color:#1e1e1e;white-space:nowrap">Mate in 3 chess puzzles</div>
  <div style="left:148px;top:134.5px;font:4.1px/5px 'Liberation Sans';color:#1e1e1e;white-space:nowrap">Mate in 4 chess puzzles</div>
  <div style="left:148px;top:139.6px;font:4.1px/5px 'Liberation Sans';color:#1e1e1e;white-space:nowrap">Mate in 5 chess puzzles</div>
  <div style="left:206px;top:146px;width:5px;height:2px;background:#9cd"></div>
  <div style="left:289.5px;top:18px;width:3.5px;height:138px;background:#f0f0f0"></div>
  <div style="left:290px;top:22px;width:2.5px;height:84px;background:#c8c8c8"></div>
  <div style="left:0;top:155px;width:290px;height:3px;background:#f0f0f0"></div>
  <div style="left:4px;top:155.5px;width:270px;height:2px;background:#d0d0d0"></div>
</div>

<!-- bottom text -->
<div class="a" style="left:45px;top:565.7px;font-size:18.3px;line-height:22px;font-weight:bold;white-space:nowrap">See more days in timeline</div>
<div class="a tx" style="left:45px;top:604.1px;font-size:11.25px;line-height:15px;white-space:nowrap">You’ll see up to 30 days in timeline and be able to do more<br>between devices if you sign in with a Microsoft account and<br>choose to send Microsoft your activity history, including info<br>about websites you browse and how you use apps and<br>services.</div>
<div class="a tx" style="left:363.5px;top:603.6px;font-size:11.25px;line-height:15px;white-space:nowrap">To learn more about how Microsoft products and services<br>use this data to personalize experiences while respecting<br>your privacy, see the following:</div>
<div class="a tx" style="left:363.5px;top:663.5px;font-size:13.6px;line-height:16px;color:#88c2e8;white-space:nowrap">Learn more</div>
<div class="a tx" style="left:463px;top:663.5px;font-size:13.6px;line-height:16px;color:#88c2e8;white-space:nowrap">Privacy Statement</div>

<!-- TASKBAR -->
<div class="a" style="left:0;top:682px;width:1280px;height:38px;background:#03111d"></div>
<div class="a" style="left:0;top:682px;width:45px;height:38px;background:#041a28"></div>
<svg class="a" style="left:14px;top:692px" width="18" height="18" viewBox="0 0 18 18"><path d="M1 3 L7.5 2.1 V8.3 H1 Z M8.5 2 L16.5 0.9 V8.3 H8.5 Z M1 9.3 H7.5 V15.6 L1 14.7 Z M8.5 9.3 H16.5 V16.9 L8.5 15.8 Z" fill="#fff"/></svg>
<div class="a" style="left:45px;top:682px;width:322px;height:38px;background:#f0f0f0"></div>
<div class="a" style="left:0;top:718px;width:340px;height:2px;background:#c6c6c6"></div>
<svg class="a" style="left:54px;top:690px" width="24" height="22"><circle cx="12.6" cy="8.8" r="5.4" fill="none" stroke="#222" stroke-width="1.4"/><path d="M8.8 12.6L3 18.4" stroke="#222" stroke-width="1.4" stroke-linecap="round"/></svg>
<div class="a" style="left:82.5px;top:693.6px;font-size:13.55px;line-height:16px;color:#1e1e1e;white-space:nowrap">Type here to search</div>
<div class="a" style="left:367px;top:682px;width:45px;height:35px;background:#0d1c28"></div>
<svg class="a" style="left:380px;top:692px" width="20" height="18" viewBox="0 0 20 18"><rect x="2.6" y="2.3" width="10.2" height="5.2" rx="0.8" fill="none" stroke="#e4e4e4" stroke-width="1.4"/><rect x="2.6" y="10.3" width="10.2" height="5.2" rx="0.8" fill="none" stroke="#e4e4e4" stroke-width="1.4"/><rect x="15.2" y="1.6" width="1.8" height="6.1" fill="#e4e4e4"/><rect x="15.2" y="9.7" width="1.8" height="2.6" fill="#e4e4e4"/><rect x="15.2" y="13.4" width="1.8" height="2.6" fill="#e4e4e4"/></svg>
<!-- edge -->
<svg class="a" style="left:427px;top:690px" width="22" height="22" viewBox="0 0 22 22"><path d="M1.2 10.8 C2.4 5 6.8 1.8 11.6 1.8 C17.2 1.8 20.6 5.6 20.6 11 V12.9 H7.3 C7.6 15.6 9.6 17.3 12.6 17.3 C14.9 17.3 16.9 16.6 18.7 15.4 V19.4 C16.9 20.5 14.6 21.1 12.1 21.1 C6.6 21.1 3.1 17.6 3.1 13 C3.1 10.6 4.1 8.6 6 7 C3.9 8 2.3 9.3 1.2 10.8 Z M7.5 9.5 C7.9 7.7 9.5 6.4 11.6 6.4 C13.7 6.4 15.3 7.6 15.5 9.5 Z" fill="#1b82e8"/></svg>
<!-- explorer -->
<svg class="a" style="left:472px;top:691px" width="23" height="20" viewBox="0 0 23 20"><path d="M1 1 H8 L10 2.5 H22 V19 H1 Z" fill="#f8d56a"/><rect x="1" y="1" width="8" height="2" fill="#e4a213"/><rect x="1" y="4" width="21" height="15" fill="#fcd24a"/><path d="M5 10 H18 V19 H15 V13.5 H8 V19 H5 Z" fill="#3b8fe0"/><rect x="9" y="14" width="5" height="3" fill="#f4c030"/></svg>
<!-- store -->
<svg class="a" style="left:517px;top:689px" width="24" height="24" viewBox="0 0 24 24"><path d="M8.2 5.5 A3.8 3.8 0 0 1 15.8 5.5" fill="none" stroke="#e8e8e8" stroke-width="1.4"/><rect x="1" y="5" width="22" height="18" rx="1.5" fill="#fff"/><rect x="7" y="9.5" width="4.5" height="4.5" fill="#f25022"/><rect x="12.5" y="9.5" width="4.5" height="4.5" fill="#7fba00"/><rect x="7" y="15" width="4.5" height="4.5" fill="#00a4ef"/><rect x="12.5" y="15" width="4.5" height="4.5" fill="#ffb900"/></svg>
<!-- mail -->
<svg class="a" style="left:563px;top:690px" width="25" height="21" viewBox="0 0 25 21">
  <path d="M0.8 6.5 L12.3 1.8 L24 6.5 V20 H0.8 Z" fill="#fff"/>
  <path d="M3 7.8 H21.5 L14.3 10 L18 16.5 Z" fill="#06121c"/>
</svg>
<!-- firefox -->
<svg class="a" style="left:609.5px;top:689.5px" width="24" height="24"><use href="#ffx" width="24" height="24"/></svg>
<!-- cmd -->
<svg class="a" style="left:655px;top:691px" width="23" height="20" viewBox="0 0 23 20"><rect x="0.5" y="0.5" width="22" height="19" fill="#0c0c0c" stroke="#9a9a9a"/><rect x="1" y="1" width="21" height="2.4" fill="#cfcfcf"/><path d="M3 6.5h3 M4 8.5l2 1 M9 10.5h6" stroke="#e0e0e0" stroke-width="1"/></svg>
<!-- firewall -->
<svg class="a" style="left:700px;top:689px" width="26" height="25" viewBox="0 0 26 25">
  <circle cx="17.2" cy="7.7" r="6.1" fill="url(#gl)"/>
  <path d="M12.3 4 q3 -2 5 -0.5 q-1 2.5 -4 3.5z M20.7 6.3 q2 1 2 3 l-2 1z" fill="#3ad030"/>
  <path d="M2.3 7 L19.8 8.7 L19.8 22.6 L2.3 19.5 Z" fill="url(#br)"/>
  <path d="M2.3 10.5 L19.8 12.2 M2.3 14 L19.8 15.7 M2.3 17.5 L19.8 19.2 M7 7.4 V10.9 M13 8 V11.6 M5 10.8 V14.3 M10.5 11.3 V14.9 M16 11.9 V15.4 M7.5 14.5 V18 M13.5 15 V18.5" stroke="#8a4030" stroke-width="0.6" opacity="0.7"/>
</svg>
<!-- white strip bottom -->
<div class="a" style="left:340px;top:717px;width:597px;height:5px;background:#fafafa;border-radius:0 5px 0 0"></div>

<!-- tray -->
<svg class="a" style="left:1084px;top:696px" width="15" height="10"><path d="M1.5 8 L7.5 2 L13.5 8" fill="none" stroke="#fff" stroke-width="1.3"/></svg>
<svg class="a" style="left:1106px;top:696px" width="17" height="11"><rect x="1" y="1.5" width="13" height="8" rx="1" fill="none" stroke="#fff" stroke-width="1.2"/><rect x="3" y="3.5" width="8" height="4" fill="#fff"/><rect x="14.5" y="4" width="1.6" height="3" fill="#fff"/></svg>
<svg class="a" style="left:1128px;top:694px" width="17" height="15"><rect x="4.5" y="1.5" width="11" height="8" fill="none" stroke="#fff" stroke-width="1.2"/><path d="M10 9.5v3M6.5 13h7M1.5 1v5h3M2.5 6v7" stroke="#fff" stroke-width="1.2" fill="none"/></svg>
<svg class="a" style="left:1150px;top:694px" width="18" height="14"><path d="M1.5 4.5h3l4-3.5v12l-4-3.5h-3z" fill="none" stroke="#fff" stroke-width="1.2"/><path d="M11 4.5q1.5 2.5 0 5M13 3q2.5 4 0 8M15 1.5q3.5 5.5 0 11" fill="none" stroke="#fff" stroke-width="1.1"/></svg>
<div class="a" style="left:1179px;top:685.9px;font-size:11px;line-height:14px;color:#fff;white-space:nowrap">4:04 AM</div>
<div class="a" style="left:1179px;top:702.5px;font-size:11px;line-height:14px;color:#fff;white-space:nowrap">7/6/2019</div>
<svg class="a" style="left:1240px;top:693px" width="18" height="17"><path d="M1.5 1.5h15v11h-4.5l-2.5 3-2.5-3h-5.5z" fill="none" stroke="#fff" stroke-width="1.2"/></svg>
<div class="a" style="left:1275px;top:682px;width:1px;height:38px;background:#6a6f78"></div>

</body></html>
